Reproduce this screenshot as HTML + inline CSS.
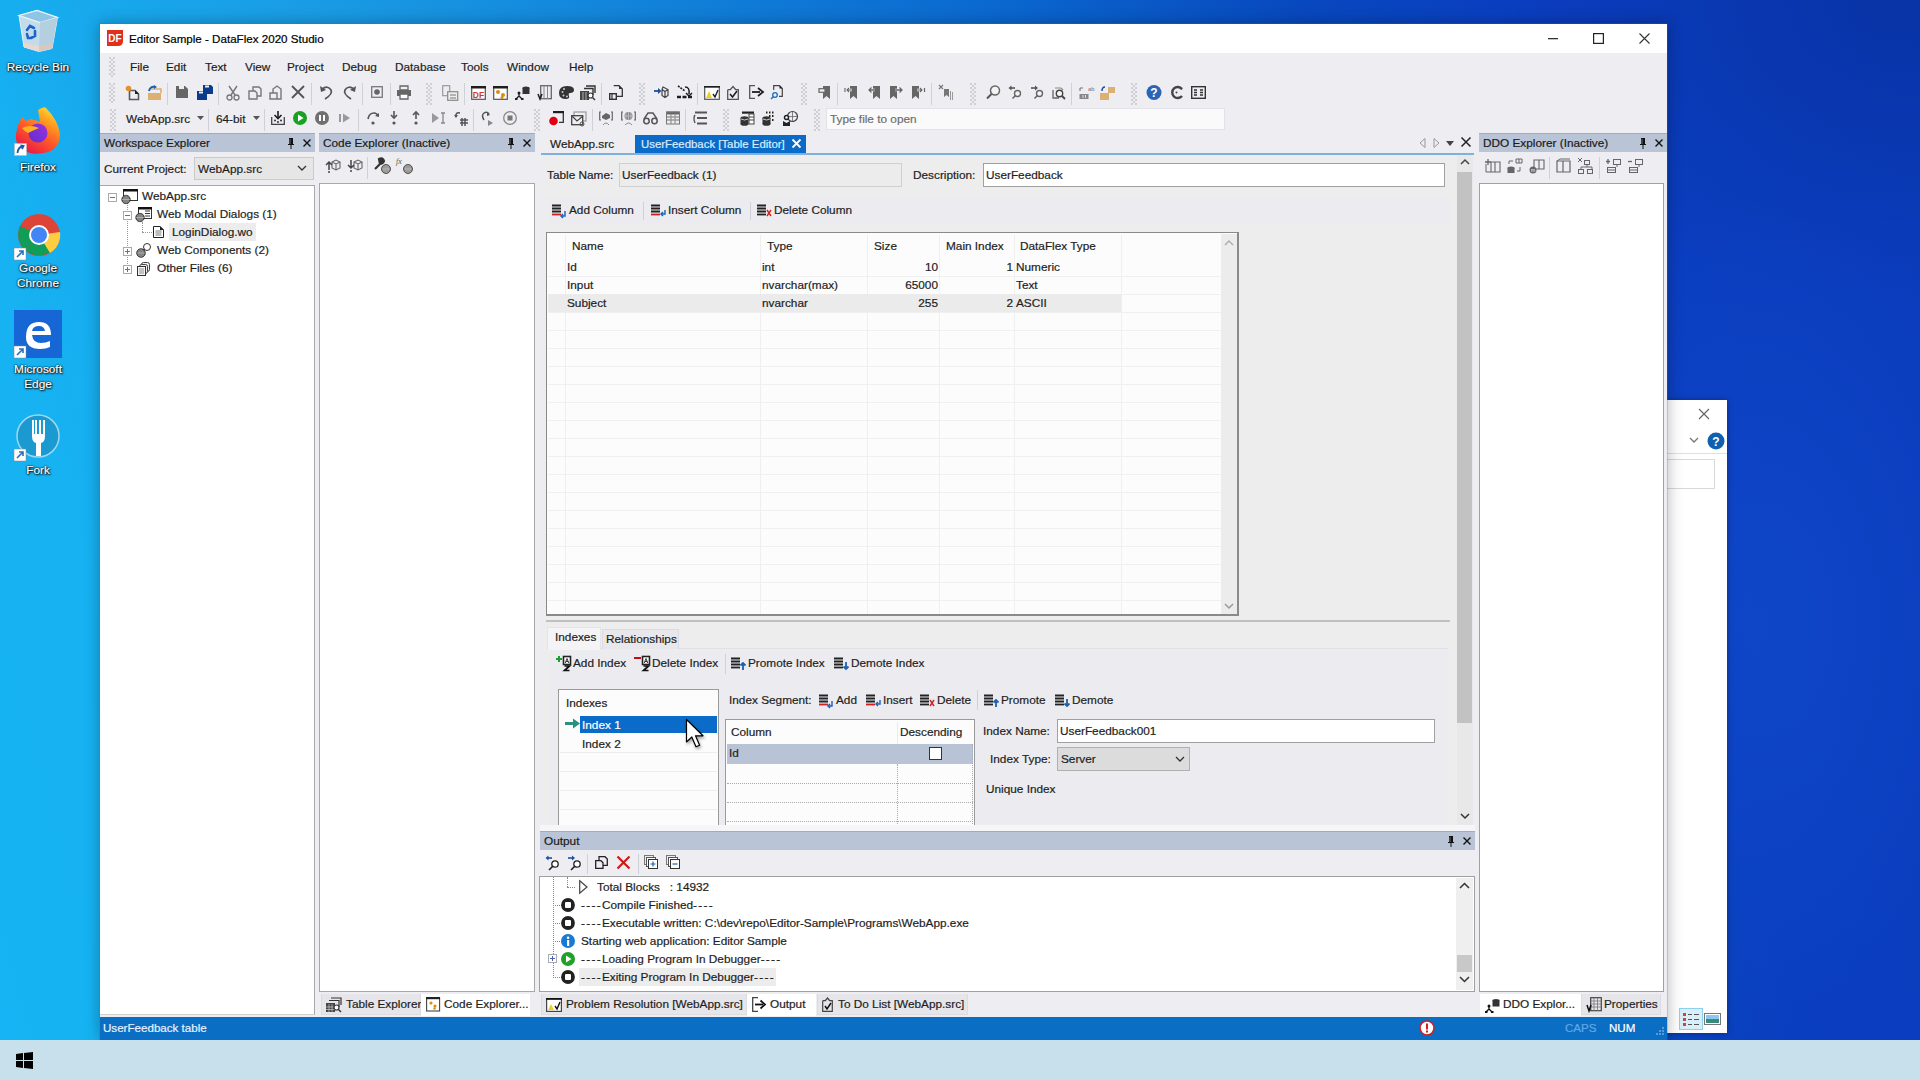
<!DOCTYPE html><html><head><meta charset="utf-8"><style>
*{margin:0;padding:0;box-sizing:border-box}
html,body{width:1920px;height:1080px;overflow:hidden}
body{position:relative;font-family:"Liberation Sans",sans-serif;font-size:12px;color:#1e1e1e;
background:radial-gradient(ellipse 260px 420px at 1760px 620px,rgba(30,100,230,.22),rgba(30,100,230,0) 100%),radial-gradient(ellipse 400px 300px at 1900px 0px,rgba(0,20,90,.22),rgba(0,20,90,0) 100%),linear-gradient(75deg,#16b4f4 0%,#16b2f2 10%,#1a9ce4 27%,#0b6ad0 57%,#0848be 72%,#0a3ec0 82%,#0a3cbc 100%)}
.t{position:absolute;white-space:nowrap;line-height:14px;-webkit-text-stroke:0.2px currentColor}
.ic{position:absolute;overflow:visible}
</style></head><body>
<svg class="ic" style="left:0px;top:0px;" width="80" height="60" viewBox="0 0 80 60"><path d="M19 15.5 L37 10.5 L57.5 17.5 L52 48.5 L39 51.5 L24 47 Z" fill="#c4dcea" stroke="#e4f2fa" stroke-width="1"/>
<path d="M19 15.5 L37 10.5 L57.5 17.5 L40 22.5 Z" fill="#8ec4e4" stroke="#e8f4fb" stroke-width="1.2"/>
<path d="M40 22.5 L57.5 17.5 L52 48.5 L39 51.5 Z" fill="#b4cfdf"/>
<path d="M24 43 L39 46 L39 51.5 L24 47Z" fill="#e8d8d0"/><path d="M39 46 L52.5 43.5 L52 48.5 L39 51.5Z" fill="#d8c8c0"/>
<path d="M27 30 L30 26 L34 28 M35 31 L35 36 L31 38 M27 34 L28 38 L31 38" fill="none" stroke="#1a64d0" stroke-width="2.6" stroke-linecap="round"/></svg>
<div class="t" style="left:-2px;top:60px;color:#fff;text-shadow:0 0 1px #000,0 0 2px #000,1px 1px 2px #000;font-size:11.8px;text-align:center;width:80px">Recycle Bin</div>
<svg class="ic" style="left:0px;top:100px;" width="80" height="60" viewBox="0 0 80 60"><defs><linearGradient id="ffg" x1="0.2" y1="1" x2="0.8" y2="0"><stop offset="0" stop-color="#e8104a"/><stop offset=".45" stop-color="#ff5a28"/><stop offset=".75" stop-color="#ffa020"/><stop offset="1" stop-color="#ffe030"/></linearGradient>
<linearGradient id="ffp" x1="0" y1="1" x2="1" y2="0"><stop offset="0" stop-color="#5a30d0"/><stop offset="1" stop-color="#a030e0"/></linearGradient></defs>
<path d="M18 25 L22 17 L26 21 L30 19 Q36 20 40 22 L38 10 Q44 6 46 8 Q58 20 60 34 Q60 50 44 53 Q30 56 20 48 Q15 42 16 34 Z" fill="url(#ffg)"/>
<circle cx="38" cy="33" r="9.5" fill="url(#ffp)"/>
<path d="M22 28 Q30 24 39 28 Q32 31 28 33 Q24 31 22 28Z" fill="#ffb020"/>
<rect x="14.5" y="43.5" width="12" height="12" fill="#fff" stroke="#bbb" stroke-width=".6"/><path d="M17.5 53 Q18 47 23 46 M20.5 45.5 L23.5 46 L22 49" stroke="#1a5aa8" stroke-width="1.8" fill="none"/></svg>
<div class="t" style="left:-2px;top:160px;color:#fff;text-shadow:0 0 1px #000,0 0 2px #000,1px 1px 2px #000;font-size:11.8px;text-align:center;width:80px">Firefox</div>
<svg class="ic" style="left:14px;top:210px;" width="48" height="52" viewBox="0 0 48 52"><circle cx="25" cy="25" r="21" fill="#db4437"/>
<path d="M25 25 L43 35 A21 21 0 0 1 11 40 Z" fill="#0f9d58"/>
<path d="M25 25 L11 40 A21 21 0 0 1 6 16 Z" fill="#0f9d58"/>
<path d="M25 25 L46 22 A21 21 0 0 1 36 43 Z" fill="#ffcd40"/>
<circle cx="25" cy="25" r="10" fill="#fff"/><circle cx="25" cy="25" r="8" fill="#4285f4"/>
<rect x="0" y="38" width="12" height="12" fill="#fff" stroke="#888" stroke-width=".5"/><path d="M3 47 L9 41 M5 41 L9 41 L9 45" stroke="#2a6fc0" stroke-width="1.6" fill="none"/></svg>
<div class="t" style="left:-2px;top:261px;color:#fff;text-shadow:0 0 1px #000,0 0 2px #000,1px 1px 2px #000;font-size:11.8px;text-align:center;width:80px">Google</div>
<div class="t" style="left:-2px;top:276px;color:#fff;text-shadow:0 0 1px #000,0 0 2px #000,1px 1px 2px #000;font-size:11.8px;text-align:center;width:80px">Chrome</div>
<svg class="ic" style="left:14px;top:310px;" width="50" height="50" viewBox="0 0 50 50"><rect x="0" y="0" width="48" height="48" fill="#1766d6"/>
<path d="M12 27 Q12 12 25 12 Q37 12 37 25 L18 25 Q19 33 27 33 Q32 33 36 31 L36 37 Q32 39 26 39 Q12 39 12 27 Z M18 21 L31 21 Q30 16 25 16 Q19 16 18 21Z" fill="#fff"/>
<rect x="0" y="36" width="12" height="12" fill="#fff" stroke="#888" stroke-width=".5"/><path d="M3 45 L9 39 M5 39 L9 39 L9 43" stroke="#2a6fc0" stroke-width="1.6" fill="none"/></svg>
<div class="t" style="left:-2px;top:362px;color:#fff;text-shadow:0 0 1px #000,0 0 2px #000,1px 1px 2px #000;font-size:11.8px;text-align:center;width:80px">Microsoft</div>
<div class="t" style="left:-2px;top:377px;color:#fff;text-shadow:0 0 1px #000,0 0 2px #000,1px 1px 2px #000;font-size:11.8px;text-align:center;width:80px">Edge</div>
<svg class="ic" style="left:14px;top:412px;" width="50" height="50" viewBox="0 0 50 50"><circle cx="24" cy="24" r="21" fill="#1a9ad0" stroke="#9fd8f0" stroke-width="1.5"/>
<path d="M18 8 L18 24 Q18 30 22 31 L22 44 L27 44 L27 31 Q31 30 31 24 L31 8 L29 8 L29 22 L27 22 L27 8 L25 8 L25 22 L23 22 L23 8 L21 8 L21 22 L20 22 L20 8Z" fill="#fff"/>
<rect x="0" y="37" width="12" height="12" fill="#fff" stroke="#888" stroke-width=".5"/><path d="M3 46 L9 40 M5 40 L9 40 L9 44" stroke="#2a6fc0" stroke-width="1.6" fill="none"/></svg>
<div class="t" style="left:-2px;top:463px;color:#fff;text-shadow:0 0 1px #000,0 0 2px #000,1px 1px 2px #000;font-size:11.8px;text-align:center;width:80px">Fork</div>
<div style="position:absolute;left:1600px;top:400px;width:127px;height:633px;background:#ffffff;box-shadow:0 0 6px rgba(0,0,0,.35)"></div>
<svg class="ic" style="left:1698px;top:408px;" width="12" height="12" viewBox="0 0 12 12"><path d="M1 1 L11 11 M11 1 L1 11" stroke="#666" stroke-width="1.2"/></svg>
<svg class="ic" style="left:1689px;top:437px;" width="10" height="7" viewBox="0 0 10 7"><path d="M1 1 L5 5 L9 1" stroke="#777" stroke-width="1.3" fill="none"/></svg>
<svg class="ic" style="left:1707px;top:432px;" width="18" height="18" viewBox="0 0 18 18"><circle cx="9" cy="9" r="8.5" fill="#1060b0"/><text x="9" y="13.5" font-size="12" font-weight="bold" text-anchor="middle" fill="#fff" font-family="Liberation Sans">?</text></svg>
<div style="position:absolute;left:1600px;top:453px;width:127px;height:1px;background:#e0e0e0"></div>
<div style="position:absolute;left:1600px;top:459px;width:115px;height:30px;border:1px solid #d8d8d8"></div>
<div style="position:absolute;left:1679px;top:1008px;width:24px;height:22px;background:#d8eef8;border:1px solid #8cd0ee"></div>
<svg class="ic" style="left:1683px;top:1012px;" width="17" height="14" viewBox="0 0 17 14"><rect x="0" y="1" width="3" height="3" fill="#c44"/><rect x="0" y="6" width="3" height="3" fill="#c44"/><rect x="0" y="11" width="3" height="3" fill="#c44"/><path d="M5 2.5 H9 M11 2.5 H16 M5 7.5 H9 M11 7.5 H16 M5 12.5 H9 M11 12.5 H16" stroke="#555"/></svg>
<svg class="ic" style="left:1704px;top:1013px;" width="17" height="12" viewBox="0 0 17 12"><rect x=".5" y=".5" width="16" height="11" fill="#fff" stroke="#777"/><rect x="2" y="2" width="13" height="8" fill="#3a8a7a"/><rect x="2" y="2" width="13" height="4" fill="#8ac8f0"/></svg>
<div style="position:absolute;left:99px;top:23px;width:1569px;height:1017px;background:rgba(30,90,140,.35);box-shadow:0 0 14px rgba(0,0,0,.28)"></div>
<div style="position:absolute;left:100px;top:24px;width:1567px;height:1016px;background:#eeeef2"></div>
<div style="position:absolute;left:100px;top:24px;width:1567px;height:29px;background:#ffffff"></div>
<svg class="ic" style="left:107px;top:30px;" width="17" height="16" viewBox="0 0 17 16"><path d="M0 0 H16 V11 Q16 16 11 16 H0Z" fill="#e0301a"/><text x="8" y="12" font-size="10" font-weight="bold" text-anchor="middle" fill="#fff" font-family="Liberation Sans">DF</text></svg>
<div class="t" style="left:129px;top:32px;font-size:11.6px;color:#000">Editor Sample - DataFlex 2020 Studio</div>
<svg class="ic" style="left:1548px;top:38px;" width="10" height="2" viewBox="0 0 10 2"><rect width="10" height="1.3" fill="#333"/></svg>
<svg class="ic" style="left:1593px;top:33px;" width="11" height="11" viewBox="0 0 11 11"><rect x=".6" y=".6" width="9.8" height="9.8" fill="none" stroke="#222" stroke-width="1.2"/></svg>
<svg class="ic" style="left:1639px;top:33px;" width="11" height="11" viewBox="0 0 11 11"><path d="M.5 .5 L10.5 10.5 M10.5 .5 L.5 10.5" stroke="#333" stroke-width="1.1"/></svg>
<div class="t" style="left:130px;top:60px;font-size:11.8px;color:#1e1e1e">File</div>
<div class="t" style="left:166px;top:60px;font-size:11.8px;color:#1e1e1e">Edit</div>
<div class="t" style="left:205px;top:60px;font-size:11.8px;color:#1e1e1e">Text</div>
<div class="t" style="left:245px;top:60px;font-size:11.8px;color:#1e1e1e">View</div>
<div class="t" style="left:287px;top:60px;font-size:11.8px;color:#1e1e1e">Project</div>
<div class="t" style="left:342px;top:60px;font-size:11.8px;color:#1e1e1e">Debug</div>
<div class="t" style="left:395px;top:60px;font-size:11.8px;color:#1e1e1e">Database</div>
<div class="t" style="left:461px;top:60px;font-size:11.8px;color:#1e1e1e">Tools</div>
<div class="t" style="left:507px;top:60px;font-size:11.8px;color:#1e1e1e">Window</div>
<div class="t" style="left:569px;top:60px;font-size:11.8px;color:#1e1e1e">Help</div>
<svg class="ic" style="left:109px;top:57px;" width="6" height="20" viewBox="0 0 6 20"><g fill="#cfcfd6"><rect x="0" y="0" width="2" height="2"/><rect x="4" y="0" width="2" height="2"/><rect x="2" y="2" width="2" height="2"/><rect x="0" y="4" width="2" height="2"/><rect x="4" y="4" width="2" height="2"/><rect x="2" y="6" width="2" height="2"/><rect x="0" y="8" width="2" height="2"/><rect x="4" y="8" width="2" height="2"/><rect x="2" y="10" width="2" height="2"/><rect x="0" y="12" width="2" height="2"/><rect x="4" y="12" width="2" height="2"/><rect x="2" y="14" width="2" height="2"/><rect x="0" y="16" width="2" height="2"/><rect x="4" y="16" width="2" height="2"/><rect x="2" y="18" width="2" height="2"/></g></svg>
<svg class="ic" style="left:109px;top:83px;" width="6" height="20" viewBox="0 0 6 20"><g fill="#cfcfd6"><rect x="0" y="0" width="2" height="2"/><rect x="4" y="0" width="2" height="2"/><rect x="2" y="2" width="2" height="2"/><rect x="0" y="4" width="2" height="2"/><rect x="4" y="4" width="2" height="2"/><rect x="2" y="6" width="2" height="2"/><rect x="0" y="8" width="2" height="2"/><rect x="4" y="8" width="2" height="2"/><rect x="2" y="10" width="2" height="2"/><rect x="0" y="12" width="2" height="2"/><rect x="4" y="12" width="2" height="2"/><rect x="2" y="14" width="2" height="2"/><rect x="0" y="16" width="2" height="2"/><rect x="4" y="16" width="2" height="2"/><rect x="2" y="18" width="2" height="2"/></g></svg>
<svg class="ic" style="left:125px;top:85px;" width="16" height="16" viewBox="0 0 16 16"><path d="M4.5 5.5 H10 L13.5 9 V14.5 H4.5Z" fill="none" stroke="#5a5a5a" stroke-width="1.6"/><path d="M10 5 L14 9 L10 9Z" fill="#1e1e1e"/><circle cx="3.5" cy="3.5" r="2.8" fill="#e8902a"/></svg>
<svg class="ic" style="left:147px;top:85px;" width="16" height="16" viewBox="0 0 16 16"><path d="M1 8 H14 V15 H1Z" fill="#dcb070"/><path d="M4 4 H14 V8" fill="none" stroke="#dcb070" stroke-width="1.6"/><path d="M2 6 Q3 1 8 2" fill="none" stroke="#1a5fb4" stroke-width="2"/><path d="M7 0 L10 2 L7 4Z" fill="#1a5fb4"/></svg>
<div style="position:absolute;left:167px;top:83px;width:1px;height:22px;background:#d0d0d8"></div>
<svg class="ic" style="left:176px;top:85px;" width="16" height="16" viewBox="0 0 16 16"><path d="M0 1 H9 L12 4 V13 H0Z" fill="#666"/><rect x="3" y="1" width="5" height="3" fill="#eee"/></svg>
<svg class="ic" style="left:197px;top:85px;" width="16" height="16" viewBox="0 0 16 16"><path d="M0 6 H8 L10 8 V15 H0Z" fill="#0b3c8a"/><path d="M6 0 H14 L16 2 V9 H6Z" fill="#0b3c8a"/><rect x="2" y="6.5" width="4" height="2" fill="#eee"/><rect x="8" y=".5" width="4" height="2" fill="#eee"/></svg>
<div style="position:absolute;left:218px;top:83px;width:1px;height:22px;background:#d0d0d8"></div>
<svg class="ic" style="left:226px;top:85px;" width="16" height="16" viewBox="0 0 16 16"><path d="M3 1 L9 10 M11 1 L5 10" stroke="#777" stroke-width="1.4" fill="none"/><circle cx="3.5" cy="12.5" r="2.5" fill="none" stroke="#777" stroke-width="1.3"/><circle cx="10.5" cy="12.5" r="2.5" fill="none" stroke="#777" stroke-width="1.3"/></svg>
<svg class="ic" style="left:248px;top:85px;" width="16" height="16" viewBox="0 0 16 16"><path d="M1 6 H7 L9 8 V14 H1Z M5 6 V2 H11 L13 4 V11 H9" fill="none" stroke="#777" stroke-width="1.4"/></svg>
<svg class="ic" style="left:269px;top:85px;" width="16" height="16" viewBox="0 0 16 16"><path d="M1 8 H8 V14 H1Z M4 8 V4 L8 1 L12 4 V14 H8" fill="none" stroke="#777" stroke-width="1.4"/></svg>
<svg class="ic" style="left:291px;top:85px;" width="16" height="16" viewBox="0 0 16 16"><path d="M1 1 L13 13 M13 1 L1 13" stroke="#555" stroke-width="1.8"/></svg>
<div style="position:absolute;left:311px;top:83px;width:1px;height:22px;background:#d0d0d8"></div>
<svg class="ic" style="left:320px;top:85px;" width="16" height="16" viewBox="0 0 16 16"><path d="M2 4 Q8 0 11 5 Q13 9 5 14" fill="none" stroke="#555" stroke-width="1.7"/><path d="M0 1 L1 7 L6 5Z" fill="#555"/></svg>
<svg class="ic" style="left:342px;top:85px;" width="16" height="16" viewBox="0 0 16 16"><path d="M12 4 Q6 0 3 5 Q1 9 9 14" fill="none" stroke="#555" stroke-width="1.7"/><path d="M14 1 L13 7 L8 5Z" fill="#555"/></svg>
<div style="position:absolute;left:362px;top:83px;width:1px;height:22px;background:#d0d0d8"></div>
<svg class="ic" style="left:371px;top:85px;" width="16" height="16" viewBox="0 0 16 16"><rect x=".7" y="1.7" width="10.6" height="10.6" fill="none" stroke="#777" stroke-width="1.3"/><circle cx="6" cy="7" r="2.8" fill="#666"/></svg>
<div style="position:absolute;left:390px;top:83px;width:1px;height:22px;background:#d0d0d8"></div>
<svg class="ic" style="left:397px;top:85px;" width="16" height="16" viewBox="0 0 16 16"><path d="M3 1 H11 V5 H3Z" fill="none" stroke="#666" stroke-width="1.3"/><path d="M0 5 H14 V11 H0Z" fill="#666"/><path d="M3 9 H11 V14 H3Z" fill="#fff" stroke="#666" stroke-width="1.3"/></svg>
<svg class="ic" style="left:426px;top:83px;" width="6" height="22" viewBox="0 0 6 22"><g fill="#cfcfd6"><rect x="0" y="0" width="2" height="2"/><rect x="4" y="0" width="2" height="2"/><rect x="2" y="2" width="2" height="2"/><rect x="0" y="4" width="2" height="2"/><rect x="4" y="4" width="2" height="2"/><rect x="2" y="6" width="2" height="2"/><rect x="0" y="8" width="2" height="2"/><rect x="4" y="8" width="2" height="2"/><rect x="2" y="10" width="2" height="2"/><rect x="0" y="12" width="2" height="2"/><rect x="4" y="12" width="2" height="2"/><rect x="2" y="14" width="2" height="2"/><rect x="0" y="16" width="2" height="2"/><rect x="4" y="16" width="2" height="2"/><rect x="2" y="18" width="2" height="2"/><rect x="0" y="20" width="2" height="2"/><rect x="4" y="20" width="2" height="2"/></g></svg>
<svg class="ic" style="left:442px;top:85px;" width="16" height="16" viewBox="0 0 16 16"><rect x=".7" y=".7" width="7" height="10" fill="none" stroke="#999" stroke-width="1.2"/><rect x="5.7" y="6.7" width="10" height="8.6" fill="#eee" stroke="#888" stroke-width="1.2"/><path d="M8 10 H14 M8 13 H14" stroke="#777"/></svg>
<div style="position:absolute;left:464px;top:83px;width:1px;height:22px;background:#d0d0d8"></div>
<svg class="ic" style="left:471px;top:85px;" width="16" height="16" viewBox="0 0 16 16"><rect x=".7" y="1.7" width="13.6" height="12.6" fill="#fff" stroke="#555" stroke-width="1.2"/><rect x="0" y="1" width="15" height="2.5" fill="#1e1e1e"/><text x="7.5" y="12.5" font-size="8.5" font-weight="bold" text-anchor="middle" fill="#d83a18" font-family="Liberation Sans">DF</text></svg>
<svg class="ic" style="left:493px;top:85px;" width="16" height="16" viewBox="0 0 16 16"><rect x=".7" y="1.7" width="13.6" height="12.6" fill="#fff" stroke="#555" stroke-width="1.2"/><rect x="0" y="1" width="15" height="2.5" fill="#1e1e1e"/><circle cx="5" cy="7" r="2" fill="#d8900a"/><circle cx="10" cy="10" r="2" fill="#d8900a"/><circle cx="9" cy="12.5" r="1.5" fill="#d8900a"/></svg>
<svg class="ic" style="left:515px;top:85px;" width="16" height="16" viewBox="0 0 16 16"><ellipse cx="11" cy="3" rx="3.5" ry="1.5" fill="#333"/><rect x="7.5" y="3" width="7" height="6" fill="#333"/><circle cx="4" cy="8" r="1.5" fill="#1e1e1e"/><path d="M4 9 V11 M1 14 L4 11 L7 14" stroke="#1e1e1e" stroke-width="1.3" fill="none"/><rect x="0" y="13" width="2.5" height="2" fill="#1e1e1e"/><rect x="6" y="13" width="2.5" height="2" fill="#1e1e1e"/></svg>
<svg class="ic" style="left:537px;top:85px;" width="16" height="16" viewBox="0 0 16 16"><rect x="3.7" y=".7" width="10.6" height="13" fill="none" stroke="#666" stroke-width="1.3"/><path d="M7 1 V14 M10.5 1 V14" stroke="#888"/><path d="M1 9 L3 14 L5 9" stroke="#1e1e1e" stroke-width="1.5" fill="none"/></svg>
<svg class="ic" style="left:559px;top:85px;" width="16" height="16" viewBox="0 0 16 16"><path d="M8 1 Q15 1 15 5 Q15 8 11 8 Q9 8 10 11 Q11 14 7 14 Q0 14 0 8 Q0 1 8 1Z" fill="#333"/><circle cx="3.5" cy="7" r="1" fill="#ccc"/><circle cx="5" cy="4" r="1" fill="#ccc"/><circle cx="4.5" cy="10.5" r="1" fill="#ccc"/><circle cx="8" cy="11.5" r="1" fill="#ccc"/></svg>
<svg class="ic" style="left:580px;top:85px;" width="16" height="16" viewBox="0 0 16 16"><path d="M6 1 H15 V8 M4 3.5 H13 V10" fill="none" stroke="#333" stroke-width="1.4"/><rect x="0" y="6" width="9" height="9" fill="#444"/><path d="M3 7 V15 M6 7 V15" stroke="#ccc" stroke-width=".8"/><circle cx="10.5" cy="10.5" r="2.5" fill="#fff" stroke="#333" stroke-width="1.2"/><path d="M12.5 12.5 L15 15" stroke="#333" stroke-width="1.4"/></svg>
<div style="position:absolute;left:601px;top:83px;width:1px;height:22px;background:#d0d0d8"></div>
<svg class="ic" style="left:609px;top:85px;" width="16" height="16" viewBox="0 0 16 16"><path d="M4.7 .7 H10 L13.3 4 V11.3 H8" fill="none" stroke="#333" stroke-width="1.3"/><path d="M10 .5 L13.5 4 H10Z" fill="#333"/><rect x=".7" y="8.7" width="6.6" height="5.6" fill="none" stroke="#333" stroke-width="1.4"/><path d="M3 9 V14" stroke="#333" stroke-width="1.2"/></svg>
<svg class="ic" style="left:639px;top:83px;" width="6" height="22" viewBox="0 0 6 22"><g fill="#cfcfd6"><rect x="0" y="0" width="2" height="2"/><rect x="4" y="0" width="2" height="2"/><rect x="2" y="2" width="2" height="2"/><rect x="0" y="4" width="2" height="2"/><rect x="4" y="4" width="2" height="2"/><rect x="2" y="6" width="2" height="2"/><rect x="0" y="8" width="2" height="2"/><rect x="4" y="8" width="2" height="2"/><rect x="2" y="10" width="2" height="2"/><rect x="0" y="12" width="2" height="2"/><rect x="4" y="12" width="2" height="2"/><rect x="2" y="14" width="2" height="2"/><rect x="0" y="16" width="2" height="2"/><rect x="4" y="16" width="2" height="2"/><rect x="2" y="18" width="2" height="2"/><rect x="0" y="20" width="2" height="2"/><rect x="4" y="20" width="2" height="2"/></g></svg>
<svg class="ic" style="left:654px;top:85px;" width="16" height="16" viewBox="0 0 16 16"><path d="M0 6 H5" stroke="#1a4fa0" stroke-width="1.8"/><path d="M4 3 L7.5 6 L4 9Z" fill="#1a4fa0"/><path d="M9 2 L14 4.5 V10.5 L11 12.5 L8 10.5 V4.5Z M8 4.5 L11 6.5 L14 4.5 M11 6.5 V12.5" fill="none" stroke="#444" stroke-width="1.2"/></svg>
<svg class="ic" style="left:677px;top:85px;" width="16" height="16" viewBox="0 0 16 16"><path d="M1 1 L8 6" stroke="#1e1e1e" stroke-width="1.6" stroke-dasharray="2 1"/><path d="M8 2 Q13 2 12 9" fill="none" stroke="#1e1e1e" stroke-width="1.5"/><path d="M9 8 L12 11 L15 8" fill="none" stroke="#1e1e1e" stroke-width="1.5"/><path d="M0 12 H4 M5.5 12 H9.5 M11 12 H15" stroke="#1e1e1e" stroke-width="2.5"/></svg>
<div style="position:absolute;left:697px;top:83px;width:1px;height:22px;background:#d0d0d8"></div>
<svg class="ic" style="left:704px;top:85px;" width="16" height="16" viewBox="0 0 16 16"><rect x=".7" y="1.7" width="14.6" height="12.6" fill="#fff" stroke="#555" stroke-width="1.2"/><rect x="0" y="1" width="16" height="1.6" fill="#1e1e1e"/><path d="M2 13 L5 6 L8 13Z" fill="#f0d020"/><path d="M9 9 L11 12 L14 5" stroke="#1e1e1e" stroke-width="1.4" fill="none"/></svg>
<svg class="ic" style="left:727px;top:85px;" width="16" height="16" viewBox="0 0 16 16"><path d="M.7 4.7 H3 M9 4.7 H11.3 V14.3 H.7 V4.7" fill="none" stroke="#555" stroke-width="1.3"/><path d="M3 5 L6 1.5 L9 5" fill="none" stroke="#555" stroke-width="1.3"/><path d="M3 9 L5.5 12 L10 6" stroke="#1e1e1e" stroke-width="1.6" fill="none"/></svg>
<svg class="ic" style="left:749px;top:85px;" width="16" height="16" viewBox="0 0 16 16"><path d="M6 .7 H.7 V13.3 H6" fill="none" stroke="#555" stroke-width="1.3"/><path d="M3 7 H11" stroke="#1e1e1e" stroke-width="1.8"/><path d="M9 3 L14 7 L9 11" stroke="#1e1e1e" stroke-width="1.8" fill="none"/></svg>
<svg class="ic" style="left:771px;top:85px;" width="16" height="16" viewBox="0 0 16 16"><path d="M2.7 5 V.7 H8.5 L11.3 3.5 V11.3 H8" fill="none" stroke="#444" stroke-width="1.2"/><path d="M8.5 .5 L11.5 3.5 H8.5Z" fill="#1e1e1e"/><circle cx="4" cy="10" r="2.3" fill="none" stroke="#1a6ac0" stroke-width="1.3"/><path d="M2.5 11.5 L0 14" stroke="#1a6ac0" stroke-width="1.5"/></svg>
<svg class="ic" style="left:801px;top:83px;" width="6" height="22" viewBox="0 0 6 22"><g fill="#cfcfd6"><rect x="0" y="0" width="2" height="2"/><rect x="4" y="0" width="2" height="2"/><rect x="2" y="2" width="2" height="2"/><rect x="0" y="4" width="2" height="2"/><rect x="4" y="4" width="2" height="2"/><rect x="2" y="6" width="2" height="2"/><rect x="0" y="8" width="2" height="2"/><rect x="4" y="8" width="2" height="2"/><rect x="2" y="10" width="2" height="2"/><rect x="0" y="12" width="2" height="2"/><rect x="4" y="12" width="2" height="2"/><rect x="2" y="14" width="2" height="2"/><rect x="0" y="16" width="2" height="2"/><rect x="4" y="16" width="2" height="2"/><rect x="2" y="18" width="2" height="2"/><rect x="0" y="20" width="2" height="2"/><rect x="4" y="20" width="2" height="2"/></g></svg>
<svg class="ic" style="left:818px;top:85px;" width="16" height="16" viewBox="0 0 16 16"><path d="M5 1 H12 V14 L8.5 11 L5 14Z" fill="#666"/><rect x="1" y="3.7" width="6" height="3.6" fill="#eee" stroke="#666" stroke-width="1.2"/></svg>
<div style="position:absolute;left:837px;top:83px;width:1px;height:22px;background:#d0d0d8"></div>
<svg class="ic" style="left:845px;top:85px;" width="16" height="16" viewBox="0 0 16 16"><path d="M5 1 H12 V14 L8.5 11 L5 14Z" fill="#666"/><path d="M0 3 V7" stroke="#666" stroke-width="1.2"/><path d="M2 5 H7 M4 3 L2 5 L4 7" stroke="#fff" stroke-width="2.4" fill="none"/><path d="M2 5 H7 M4 3 L2 5 L4 7" stroke="#666" stroke-width="1.2" fill="none"/></svg>
<svg class="ic" style="left:868px;top:85px;" width="16" height="16" viewBox="0 0 16 16"><path d="M5 1 H12 V14 L8.5 11 L5 14Z" fill="#666"/><path d="M1 5 H7 M3.5 2.5 L1 5 L3.5 7.5" stroke="#fff" stroke-width="2.4" fill="none"/><path d="M1 5 H7 M3.5 2.5 L1 5 L3.5 7.5" stroke="#666" stroke-width="1.4" fill="none"/></svg>
<svg class="ic" style="left:889px;top:85px;" width="16" height="16" viewBox="0 0 16 16"><path d="M1 1 H8 V14 L4.5 11 L1 14Z" fill="#666"/><path d="M6 5 H13 M10.5 2.5 L13 5 L10.5 7.5" stroke="#fff" stroke-width="2.4" fill="none"/><path d="M6 5 H13 M10.5 2.5 L13 5 L10.5 7.5" stroke="#666" stroke-width="1.4" fill="none"/></svg>
<svg class="ic" style="left:911px;top:85px;" width="16" height="16" viewBox="0 0 16 16"><path d="M1 1 H8 V14 L4.5 11 L1 14Z" fill="#666"/><path d="M6 5 H11 M9 3 L11 5 L9 7" stroke="#fff" stroke-width="2.4" fill="none"/><path d="M6 5 H11 M9 3 L11 5 L9 7" stroke="#666" stroke-width="1.2" fill="none"/><path d="M13.5 3 V7" stroke="#666" stroke-width="1.2"/></svg>
<div style="position:absolute;left:931px;top:83px;width:1px;height:22px;background:#d0d0d8"></div>
<svg class="ic" style="left:939px;top:85px;" width="16" height="16" viewBox="0 0 16 16"><path d="M0 0 L4 4 M4 0 L0 4" stroke="#777" stroke-width="1.1"/><path d="M5 4 H10 V12 L7.5 10 L5 12Z" fill="#777"/><path d="M11.5 6 V15 M13.5 7 V15" stroke="#999" stroke-width="1"/></svg>
<svg class="ic" style="left:970px;top:83px;" width="6" height="22" viewBox="0 0 6 22"><g fill="#cfcfd6"><rect x="0" y="0" width="2" height="2"/><rect x="4" y="0" width="2" height="2"/><rect x="2" y="2" width="2" height="2"/><rect x="0" y="4" width="2" height="2"/><rect x="4" y="4" width="2" height="2"/><rect x="2" y="6" width="2" height="2"/><rect x="0" y="8" width="2" height="2"/><rect x="4" y="8" width="2" height="2"/><rect x="2" y="10" width="2" height="2"/><rect x="0" y="12" width="2" height="2"/><rect x="4" y="12" width="2" height="2"/><rect x="2" y="14" width="2" height="2"/><rect x="0" y="16" width="2" height="2"/><rect x="4" y="16" width="2" height="2"/><rect x="2" y="18" width="2" height="2"/><rect x="0" y="20" width="2" height="2"/><rect x="4" y="20" width="2" height="2"/></g></svg>
<svg class="ic" style="left:986px;top:85px;" width="16" height="16" viewBox="0 0 16 16"><circle cx="9" cy="5.5" r="4.5" fill="#f4f4f4" stroke="#666" stroke-width="1.5"/><path d="M5.5 9 L1 13.5" stroke="#555" stroke-width="2"/></svg>
<svg class="ic" style="left:1008px;top:85px;" width="16" height="16" viewBox="0 0 16 16"><circle cx="9.5" cy="8.5" r="3" fill="#f4f4f4" stroke="#666" stroke-width="1.4"/><path d="M7.5 10.5 L4.5 13.5" stroke="#666" stroke-width="1.6"/><path d="M2 3 H7" stroke="#555" stroke-width="1.6"/><path d="M3.5 .5 L.5 3 L3.5 5.5" fill="#555"/></svg>
<svg class="ic" style="left:1030px;top:85px;" width="16" height="16" viewBox="0 0 16 16"><circle cx="9.5" cy="8.5" r="3" fill="#f4f4f4" stroke="#666" stroke-width="1.4"/><path d="M7.5 10.5 L4.5 13.5" stroke="#666" stroke-width="1.6"/><path d="M1 3 H6" stroke="#555" stroke-width="1.6"/><path d="M5 .5 L8 3 L5 5.5" fill="#555"/></svg>
<svg class="ic" style="left:1051px;top:85px;" width="16" height="16" viewBox="0 0 16 16"><path d="M2 5 V13 H8" fill="none" stroke="#666" stroke-width="1.3"/><path d="M4 3 H10 L12 5" fill="none" stroke="#888" stroke-width="1.1"/><circle cx="8.5" cy="8.5" r="3.2" fill="#f4f4f4" stroke="#444" stroke-width="1.4"/><path d="M11 11 L14 14" stroke="#444" stroke-width="1.8"/></svg>
<div style="position:absolute;left:1071px;top:83px;width:1px;height:22px;background:#d0d0d8"></div>
<svg class="ic" style="left:1079px;top:85px;" width="16" height="16" viewBox="0 0 16 16"><path d="M1 3 H4 M1 3 V6" stroke="#777" stroke-width="1.1" fill="none"/><text x="9" y="6" font-size="6" fill="#777" font-family="Liberation Sans">ab</text><rect x=".5" y="9" width="9" height="5" fill="#888"/><path d="M4 10 V13 M6.5 10 L6.5 13" stroke="#eee" stroke-width=".8"/></svg>
<svg class="ic" style="left:1100px;top:85px;" width="16" height="16" viewBox="0 0 16 16"><rect x="0" y="8" width="9" height="7" fill="#dcb070"/><rect x="8" y="2" width="7" height="6" fill="#dcb070"/><path d="M2 6 Q2 2 5 2" stroke="#1a4fa0" stroke-width="1.5" fill="none"/></svg>
<svg class="ic" style="left:1131px;top:83px;" width="6" height="22" viewBox="0 0 6 22"><g fill="#cfcfd6"><rect x="0" y="0" width="2" height="2"/><rect x="4" y="0" width="2" height="2"/><rect x="2" y="2" width="2" height="2"/><rect x="0" y="4" width="2" height="2"/><rect x="4" y="4" width="2" height="2"/><rect x="2" y="6" width="2" height="2"/><rect x="0" y="8" width="2" height="2"/><rect x="4" y="8" width="2" height="2"/><rect x="2" y="10" width="2" height="2"/><rect x="0" y="12" width="2" height="2"/><rect x="4" y="12" width="2" height="2"/><rect x="2" y="14" width="2" height="2"/><rect x="0" y="16" width="2" height="2"/><rect x="4" y="16" width="2" height="2"/><rect x="2" y="18" width="2" height="2"/><rect x="0" y="20" width="2" height="2"/><rect x="4" y="20" width="2" height="2"/></g></svg>
<svg class="ic" style="left:1146px;top:85px;" width="16" height="16" viewBox="0 0 16 16"><circle cx="8" cy="7.5" r="7.5" fill="#2a64b4"/><text x="8" y="12" font-size="12" font-weight="bold" text-anchor="middle" fill="#fff" font-family="Liberation Sans">?</text></svg>
<svg class="ic" style="left:1170px;top:85px;" width="16" height="16" viewBox="0 0 16 16"><path d="M12 4 A5.5 5.5 0 1 0 12 11" fill="none" stroke="#444" stroke-width="2.4"/><path d="M9 2 L12 4.5" stroke="#444" stroke-width="1.2"/><circle cx="6.5" cy="7.5" r="1" fill="#444"/></svg>
<svg class="ic" style="left:1191px;top:85px;" width="16" height="16" viewBox="0 0 16 16"><rect x=".7" y="1.7" width="13.6" height="11.6" fill="none" stroke="#333" stroke-width="1.4"/><path d="M3 5 H6 M9 5 H12 M3 7.5 H6 M9 7.5 H12 M3 10 H6 M9 10 H12" stroke="#333" stroke-width="1.3"/></svg>
<svg class="ic" style="left:110px;top:109px;" width="6" height="22" viewBox="0 0 6 22"><g fill="#cfcfd6"><rect x="0" y="0" width="2" height="2"/><rect x="4" y="0" width="2" height="2"/><rect x="2" y="2" width="2" height="2"/><rect x="0" y="4" width="2" height="2"/><rect x="4" y="4" width="2" height="2"/><rect x="2" y="6" width="2" height="2"/><rect x="0" y="8" width="2" height="2"/><rect x="4" y="8" width="2" height="2"/><rect x="2" y="10" width="2" height="2"/><rect x="0" y="12" width="2" height="2"/><rect x="4" y="12" width="2" height="2"/><rect x="2" y="14" width="2" height="2"/><rect x="0" y="16" width="2" height="2"/><rect x="4" y="16" width="2" height="2"/><rect x="2" y="18" width="2" height="2"/><rect x="0" y="20" width="2" height="2"/><rect x="4" y="20" width="2" height="2"/></g></svg>
<div class="t" style="left:126px;top:112px;font-size:11.8px">WebApp.src</div>
<svg class="ic" style="left:197px;top:116px;" width="7" height="4" viewBox="0 0 7 4"><path d="M0 0 H7 L3.5 4Z" fill="#555"/></svg>
<div style="position:absolute;left:208px;top:109px;width:1px;height:22px;background:#d0d0d8"></div>
<div class="t" style="left:216px;top:112px;font-size:11.8px">64-bit</div>
<svg class="ic" style="left:253px;top:116px;" width="7" height="4" viewBox="0 0 7 4"><path d="M0 0 H7 L3.5 4Z" fill="#555"/></svg>
<div style="position:absolute;left:264px;top:109px;width:1px;height:22px;background:#d0d0d8"></div>
<svg class="ic" style="left:271px;top:111px;" width="16" height="16" viewBox="0 0 16 16"><path d="M.7 6 V13.3 H13.3 V6" fill="none" stroke="#444" stroke-width="1.3"/><path d="M7 0 V7" stroke="#1e1e1e" stroke-width="1.6"/><path d="M3.5 4 L7 7.5 L10.5 4" stroke="#1e1e1e" stroke-width="1.6" fill="none"/><circle cx="4" cy="9.5" r=".9" fill="#1e1e1e"/><circle cx="7" cy="11" r=".9" fill="#1e1e1e"/><circle cx="10" cy="9.5" r=".9" fill="#1e1e1e"/></svg>
<svg class="ic" style="left:293px;top:111px;" width="16" height="16" viewBox="0 0 16 16"><circle cx="7" cy="7" r="7" fill="#1aa024"/><path d="M5 3.5 L10.5 7 L5 10.5Z" fill="#fff"/></svg>
<svg class="ic" style="left:315px;top:111px;" width="16" height="16" viewBox="0 0 16 16"><circle cx="7" cy="7" r="7" fill="#707070"/><rect x="4" y="4" width="2" height="6" fill="#fff"/><rect x="8" y="4" width="2" height="6" fill="#fff"/></svg>
<svg class="ic" style="left:339px;top:111px;" width="16" height="16" viewBox="0 0 16 16"><rect x="0" y="3" width="2" height="8" fill="#999"/><path d="M4 2.5 L11 7 L4 11.5Z" fill="#999"/></svg>
<div style="position:absolute;left:358px;top:109px;width:1px;height:22px;background:#d0d0d8"></div>
<svg class="ic" style="left:366px;top:111px;" width="16" height="16" viewBox="0 0 16 16"><path d="M2 8 Q3 2 8 2 Q11 2 12 5" fill="none" stroke="#555" stroke-width="1.6"/><path d="M9 5 L13 6 L13 2Z" fill="#555"/><circle cx="7" cy="12" r="1.6" fill="#555"/></svg>
<svg class="ic" style="left:388px;top:111px;" width="16" height="16" viewBox="0 0 16 16"><path d="M6 0 V6" stroke="#555" stroke-width="1.6"/><path d="M3 4 L6 7 L9 4" stroke="#555" stroke-width="1.6" fill="none"/><circle cx="6" cy="12" r="1.6" fill="#555"/></svg>
<svg class="ic" style="left:410px;top:111px;" width="16" height="16" viewBox="0 0 16 16"><path d="M6 8 V2" stroke="#555" stroke-width="1.6"/><path d="M3 4 L6 1 L9 4" stroke="#555" stroke-width="1.6" fill="none"/><circle cx="6" cy="12" r="1.6" fill="#555"/></svg>
<svg class="ic" style="left:432px;top:111px;" width="16" height="16" viewBox="0 0 16 16"><path d="M0 2 L7 7 L0 12Z" fill="#999"/><path d="M9 2 H13 M11 2 V12 M9 12 H13" stroke="#888" stroke-width="1.3"/></svg>
<svg class="ic" style="left:454px;top:111px;" width="16" height="16" viewBox="0 0 16 16"><path d="M2 6 Q1 1 6 2" fill="none" stroke="#555" stroke-width="1.5"/><path d="M0 4 L2 7 L4 4Z" fill="#555"/><path d="M6 9 H14 M6 12 H14 M8 7 V15 M11 7 V15" stroke="#555" stroke-width="1.5"/></svg>
<div style="position:absolute;left:473px;top:109px;width:1px;height:22px;background:#d0d0d8"></div>
<svg class="ic" style="left:481px;top:111px;" width="16" height="16" viewBox="0 0 16 16"><path d="M3 9 Q0 4 3 2 Q6 0 8 3" fill="none" stroke="#555" stroke-width="1.5"/><path d="M6 1 L9 4 L6 5Z" fill="#555"/><path d="M7 9 L12 12 L7 15Z" fill="#888"/></svg>
<svg class="ic" style="left:503px;top:111px;" width="16" height="16" viewBox="0 0 16 16"><circle cx="7" cy="7" r="6.3" fill="none" stroke="#888" stroke-width="1.3"/><rect x="4.5" y="4.5" width="5" height="5" fill="#777"/></svg>
<svg class="ic" style="left:534px;top:109px;" width="6" height="22" viewBox="0 0 6 22"><g fill="#cfcfd6"><rect x="0" y="0" width="2" height="2"/><rect x="4" y="0" width="2" height="2"/><rect x="2" y="2" width="2" height="2"/><rect x="0" y="4" width="2" height="2"/><rect x="4" y="4" width="2" height="2"/><rect x="2" y="6" width="2" height="2"/><rect x="0" y="8" width="2" height="2"/><rect x="4" y="8" width="2" height="2"/><rect x="2" y="10" width="2" height="2"/><rect x="0" y="12" width="2" height="2"/><rect x="4" y="12" width="2" height="2"/><rect x="2" y="14" width="2" height="2"/><rect x="0" y="16" width="2" height="2"/><rect x="4" y="16" width="2" height="2"/><rect x="2" y="18" width="2" height="2"/><rect x="0" y="20" width="2" height="2"/><rect x="4" y="20" width="2" height="2"/></g></svg>
<svg class="ic" style="left:549px;top:111px;" width="16" height="16" viewBox="0 0 16 16"><path d="M4 .7 H14.3 V11.3 H10" fill="none" stroke="#333" stroke-width="1.3"/><rect x="4" y="0" width="11" height="2.2" fill="#1e1e1e"/><circle cx="4.5" cy="10" r="4.3" fill="#e00010"/></svg>
<svg class="ic" style="left:571px;top:111px;" width="16" height="16" viewBox="0 0 16 16"><rect x="3" y="1" width="12" height="9" fill="none" stroke="#999" stroke-width="1.2"/><rect x=".7" y="4.7" width="11" height="9" fill="#f0f0f0" stroke="#444" stroke-width="1.3"/><path d="M1 5 L6 10 L12 5" fill="none" stroke="#444" stroke-width="1.2"/><circle cx="11" cy="13" r="2" fill="none" stroke="#555"/></svg>
<div style="position:absolute;left:592px;top:109px;width:1px;height:22px;background:#d0d0d8"></div>
<svg class="ic" style="left:599px;top:111px;" width="16" height="16" viewBox="0 0 16 16"><path d="M2 1 H0.7 V9 H2 M12 1 H13.3 V9 H12" fill="none" stroke="#666" stroke-width="1.2"/><path d="M3 5 L7 2 L11 4 V7 L7 9 L3 7Z" fill="#666"/><path d="M4 14 Q7 10 10 14" fill="none" stroke="#888"/></svg>
<svg class="ic" style="left:621px;top:111px;" width="16" height="16" viewBox="0 0 16 16"><path d="M2 1 H0.7 V9 H2 M13 1 H14.3 V9 H13" fill="none" stroke="#666" stroke-width="1.2"/><circle cx="7.5" cy="5" r="4" fill="#888"/><path d="M5 1.5 V8.5 M7.5 1 V9 M10 1.5 V8.5 M3.5 5 H11.5" stroke="#ccc" stroke-width=".7"/><path d="M4 14 Q7.5 10 11 14" fill="none" stroke="#888"/></svg>
<svg class="ic" style="left:643px;top:111px;" width="16" height="16" viewBox="0 0 16 16"><circle cx="3.5" cy="10" r="2.7" fill="none" stroke="#555" stroke-width="1.5"/><circle cx="11.5" cy="10" r="2.7" fill="none" stroke="#555" stroke-width="1.5"/><path d="M1 8 L5 2 H10 L14 8" fill="none" stroke="#555" stroke-width="1.4"/></svg>
<svg class="ic" style="left:665px;top:111px;" width="16" height="16" viewBox="0 0 16 16"><rect x="1.5" y=".5" width="13" height="3" fill="#666"/><rect x="1.5" y="1" width="13" height="12" fill="none" stroke="#777" stroke-width="1"/><path d="M2 6 H14 M2 9 H14 M6 3 V13 M10 3 V13" stroke="#999" stroke-width="1.3"/></svg>
<div style="position:absolute;left:685px;top:109px;width:1px;height:22px;background:#d0d0d8"></div>
<svg class="ic" style="left:693px;top:111px;" width="16" height="16" viewBox="0 0 16 16"><path d="M2 1.5 H14 M4 7 H14 M4 12.5 H14" stroke="#555" stroke-width="2.2"/><path d="M2 4 Q0 7 2 12" stroke="#555" stroke-width="1.4" fill="none"/></svg>
<svg class="ic" style="left:723px;top:109px;" width="6" height="22" viewBox="0 0 6 22"><g fill="#cfcfd6"><rect x="0" y="0" width="2" height="2"/><rect x="4" y="0" width="2" height="2"/><rect x="2" y="2" width="2" height="2"/><rect x="0" y="4" width="2" height="2"/><rect x="4" y="4" width="2" height="2"/><rect x="2" y="6" width="2" height="2"/><rect x="0" y="8" width="2" height="2"/><rect x="4" y="8" width="2" height="2"/><rect x="2" y="10" width="2" height="2"/><rect x="0" y="12" width="2" height="2"/><rect x="4" y="12" width="2" height="2"/><rect x="2" y="14" width="2" height="2"/><rect x="0" y="16" width="2" height="2"/><rect x="4" y="16" width="2" height="2"/><rect x="2" y="18" width="2" height="2"/><rect x="0" y="20" width="2" height="2"/><rect x="4" y="20" width="2" height="2"/></g></svg>
<svg class="ic" style="left:740px;top:111px;" width="16" height="16" viewBox="0 0 16 16"><ellipse cx="4.5" cy="7" rx="4" ry="1.8" fill="#333"/><rect x=".5" y="7" width="8" height="6" fill="#333"/><ellipse cx="4.5" cy="13" rx="4" ry="1.8" fill="#333"/><path d="M1 8 Q4.5 10 8 8" stroke="#eee" stroke-width=".8" fill="none"/><rect x="2" y=".5" width="12" height="2.2" fill="#222"/><rect x="9" y="3" width="5" height="10" fill="#fff" stroke="#444"/><path d="M9 6 H14 M9 9 H14" stroke="#444"/></svg>
<svg class="ic" style="left:762px;top:111px;" width="16" height="16" viewBox="0 0 16 16"><ellipse cx="4.5" cy="7" rx="4" ry="1.8" fill="#333"/><rect x=".5" y="7" width="8" height="6" fill="#333"/><ellipse cx="4.5" cy="13" rx="4" ry="1.8" fill="#333"/><path d="M1 8 Q4.5 10 8 8" stroke="#eee" stroke-width=".8" fill="none"/><path d="M4 1.5 H5.5 M7 1.5 H8.5 M10 1.5 H11.5 M10 5 H11.5 M10 9 H11.5 M7 5 H8.5" stroke="#222" stroke-width="2"/></svg>
<svg class="ic" style="left:783px;top:111px;" width="16" height="16" viewBox="0 0 16 16"><circle cx="9.5" cy="5.5" r="5" fill="none" stroke="#444" stroke-width="1.2"/><path d="M9.5 1 V10 M5 5.5 H14" stroke="#666" stroke-width=".8"/><circle cx="3.5" cy="6.5" r="2" fill="#fff" stroke="#222" stroke-width="1.5"/><path d="M0 15 V10 L3.5 12 L7 10 V15Z" fill="#222"/></svg>
<svg class="ic" style="left:814px;top:109px;" width="6" height="22" viewBox="0 0 6 22"><g fill="#cfcfd6"><rect x="0" y="0" width="2" height="2"/><rect x="4" y="0" width="2" height="2"/><rect x="2" y="2" width="2" height="2"/><rect x="0" y="4" width="2" height="2"/><rect x="4" y="4" width="2" height="2"/><rect x="2" y="6" width="2" height="2"/><rect x="0" y="8" width="2" height="2"/><rect x="4" y="8" width="2" height="2"/><rect x="2" y="10" width="2" height="2"/><rect x="0" y="12" width="2" height="2"/><rect x="4" y="12" width="2" height="2"/><rect x="2" y="14" width="2" height="2"/><rect x="0" y="16" width="2" height="2"/><rect x="4" y="16" width="2" height="2"/><rect x="2" y="18" width="2" height="2"/><rect x="0" y="20" width="2" height="2"/><rect x="4" y="20" width="2" height="2"/></g></svg>
<div style="position:absolute;left:826px;top:108px;width:399px;height:22px;background:#fafafa;border:1px solid #e2e2e8"></div>
<div class="t" style="left:830px;top:112px;color:#6e6e6e;font-size:11.8px">Type file to open</div>
<div style="position:absolute;left:100px;top:1017px;width:1567px;height:23px;background:#0a6ec4"></div>
<div class="t" style="left:103px;top:1021px;color:#e8f2ff;font-size:11.6px">UserFeedback table</div>
<svg class="ic" style="left:1419px;top:1020px;" width="16" height="16" viewBox="0 0 16 16"><circle cx="8" cy="8" r="7" fill="#fff" stroke="#d02020" stroke-width="1.6"/><rect x="7" y="3.5" width="2" height="6" fill="#d02020"/><rect x="7" y="10.5" width="2" height="2" fill="#d02020"/></svg>
<div class="t" style="left:1565px;top:1021px;color:#62a8e4;font-size:11.6px">CAPS</div>
<div class="t" style="left:1609px;top:1021px;color:#ffffff;font-size:11.6px">NUM</div>
<svg class="ic" style="left:1654px;top:1027px;" width="10" height="10" viewBox="0 0 10 10"><g fill="#5a9ad8"><rect x="8" y="0" width="2" height="2"/><rect x="5" y="3" width="2" height="2"/><rect x="8" y="3" width="2" height="2"/><rect x="2" y="6" width="2" height="2"/><rect x="5" y="6" width="2" height="2"/><rect x="8" y="6" width="2" height="2"/></g></svg>
<div style="position:absolute;left:100px;top:133px;width:215px;height:19px;background:#b9c5d7;border-top:1px solid #a6aab8"></div>
<div class="t" style="left:104px;top:136px;font-size:11.8px;color:#1a1a1a">Workspace Explorer</div>
<svg class="ic" style="left:287px;top:138px;" width="8" height="11" viewBox="0 0 8 11"><path d="M2 0 H6 V6 H7 V7 H1 V6 H2Z" fill="#111"/><path d="M3 1 V6" stroke="#888" stroke-width=".8"/><rect x="3.5" y="7" width="1" height="4" fill="#111"/></svg>
<svg class="ic" style="left:303px;top:139px;" width="8" height="8" viewBox="0 0 8 8"><path d="M.5 .5 L7.5 7.5 M7.5 .5 L.5 7.5" stroke="#111" stroke-width="1.4"/></svg>
<div class="t" style="left:104px;top:162px;font-size:11.8px">Current Project:</div>
<div style="position:absolute;left:194px;top:157px;width:120px;height:23px;background:#e6e6e6;border:1px solid #cacaca"></div>
<div class="t" style="left:198px;top:162px;font-size:11.8px">WebApp.src</div>
<svg class="ic" style="left:297px;top:165px;" width="10" height="6" viewBox="0 0 10 6"><path d="M1 1 L5 5 L9 1" stroke="#333" stroke-width="1.3" fill="none"/></svg>
<div style="position:absolute;left:100px;top:185px;width:215px;height:830px;background:#fff;border:1px solid #a8a8a8;border-left:none;border-bottom-color:#d0d0d0"></div>
<div style="position:absolute;left:112px;top:201px;width:0px;height:0px;"></div>
<div style="position:absolute;left:127px;top:203px;width:1px;height:65px;border-left:1px dotted #999"></div>
<div style="position:absolute;left:142px;top:222px;width:1px;height:10px;border-left:1px dotted #999"></div>
<div style="position:absolute;left:142px;top:232px;width:10px;height:1px;border-top:1px dotted #999"></div>
<svg class="ic" style="left:108px;top:193px;" width="9" height="9" viewBox="0 0 9 9"><rect x=".5" y=".5" width="8" height="8" fill="#fff" stroke="#aaa"/><path d="M2 4.5 H7" stroke="#6070a0"/></svg>
<svg class="ic" style="left:121px;top:189px;" width="17" height="15" viewBox="0 0 17 15"><rect x="2.5" y=".5" width="14" height="11" fill="#fff" stroke="#333"/><rect x="2" y="0" width="15" height="2.5" fill="#111"/><circle cx="5" cy="10.5" r="4.2" fill="#666" stroke="#222" stroke-width=".8"/><path d="M1 10.5 H9 M5 6.5 V14.5 M3 7.5 V13.5 M7 7.5 V13.5" stroke="#ccc" stroke-width=".6"/></svg>
<div class="t" style="left:142px;top:189px;font-size:11.8px">WebApp.src</div>
<svg class="ic" style="left:123px;top:211px;" width="9" height="9" viewBox="0 0 9 9"><rect x=".5" y=".5" width="8" height="8" fill="#fff" stroke="#aaa"/><path d="M2 4.5 H7" stroke="#6070a0"/></svg>
<svg class="ic" style="left:135px;top:207px;" width="17" height="15" viewBox="0 0 17 15"><rect x="3.5" y=".5" width="13" height="11" fill="#fff" stroke="#333"/><rect x="3" y="0" width="14" height="2.5" fill="#111"/><path d="M10 4 H15 M10 6.5 H15 M10 9 H15" stroke="#333"/><circle cx="5" cy="10.5" r="4.2" fill="#666" stroke="#222" stroke-width=".8"/><path d="M1 10.5 H9 M5 6.5 V14.5 M3 7.5 V13.5 M7 7.5 V13.5" stroke="#ccc" stroke-width=".6"/></svg>
<div class="t" style="left:157px;top:207px;font-size:11.8px">Web Modal Dialogs (1)</div>
<div style="position:absolute;left:169px;top:223px;width:87px;height:18px;background:#ececec"></div>
<svg class="ic" style="left:153px;top:226px;" width="11" height="12" viewBox="0 0 11 12"><path d="M.5 .5 H7 L10.5 4 V11.5 H.5Z" fill="#fff" stroke="#222"/><path d="M7 0 L11 4 H7Z" fill="#222"/><path d="M2.5 5 H8.5 M2.5 7 H8.5 M2.5 9 H8.5" stroke="#555" stroke-width=".8"/></svg>
<div class="t" style="left:172px;top:225px;font-size:11.8px">LoginDialog.wo</div>
<svg class="ic" style="left:123px;top:247px;" width="9" height="9" viewBox="0 0 9 9"><rect x=".5" y=".5" width="8" height="8" fill="#fff" stroke="#aaa"/><path d="M2 4.5 H7" stroke="#6070a0"/><path d="M4.5 2 V7" stroke="#6070a0"/></svg>
<svg class="ic" style="left:136px;top:243px;" width="16" height="15" viewBox="0 0 16 15"><circle cx="11" cy="4" r="3.5" fill="#fff" stroke="#333"/><circle cx="5" cy="10" r="4.3" fill="#666" stroke="#222" stroke-width=".8"/><path d="M1 10 H9 M5 6 V14 M3 7 V13 M7 7 V13" stroke="#ccc" stroke-width=".6"/><path d="M7 7 L9 6" stroke="#333"/></svg>
<div class="t" style="left:157px;top:243px;font-size:11.8px">Web Components (2)</div>
<svg class="ic" style="left:123px;top:265px;" width="9" height="9" viewBox="0 0 9 9"><rect x=".5" y=".5" width="8" height="8" fill="#fff" stroke="#aaa"/><path d="M2 4.5 H7" stroke="#6070a0"/><path d="M4.5 2 V7" stroke="#6070a0"/></svg>
<svg class="ic" style="left:137px;top:262px;" width="13" height="14" viewBox="0 0 13 14"><rect x="4.5" y=".5" width="8" height="9" fill="#eee" stroke="#444" rx="2"/><rect x="2.5" y="2.5" width="8" height="9" fill="#eee" stroke="#444" rx="2"/><rect x=".5" y="4.5" width="8" height="9" fill="#f4f4f4" stroke="#333"/><path d="M2 7 H7 M2 9 H7 M2 11 H7" stroke="#666" stroke-width=".7"/></svg>
<div class="t" style="left:157px;top:261px;font-size:11.8px">Other Files (6)</div>
<div style="position:absolute;left:319px;top:133px;width:216px;height:19px;background:#b9c5d7;border-top:1px solid #a6aab8"></div>
<div class="t" style="left:323px;top:136px;font-size:11.8px;color:#1a1a1a">Code Explorer (Inactive)</div>
<svg class="ic" style="left:507px;top:138px;" width="8" height="11" viewBox="0 0 8 11"><path d="M2 0 H6 V6 H7 V7 H1 V6 H2Z" fill="#111"/><path d="M3 1 V6" stroke="#888" stroke-width=".8"/><rect x="3.5" y="7" width="1" height="4" fill="#111"/></svg>
<svg class="ic" style="left:523px;top:139px;" width="8" height="8" viewBox="0 0 8 8"><path d="M.5 .5 L7.5 7.5 M7.5 .5 L.5 7.5" stroke="#111" stroke-width="1.4"/></svg>
<svg class="ic" style="left:325px;top:158px;" width="16" height="16" viewBox="0 0 16 16"><path d="M7 4 L11 2 L15 4 V10 L11 12 L7 10Z M7 4 L11 6 L15 4 M11 6 V12" fill="none" stroke="#666" stroke-width="1.1"/><path d="M4 12 V4 M1 7 L4 4 L7 7" stroke="#444" stroke-width="1.5" fill="none"/><circle cx="4" cy="14" r="1" fill="#444"/></svg>
<svg class="ic" style="left:347px;top:158px;" width="16" height="16" viewBox="0 0 16 16"><path d="M7 4 L11 2 L15 4 V10 L11 12 L7 10Z M7 4 L11 6 L15 4 M11 6 V12" fill="none" stroke="#666" stroke-width="1.1"/><path d="M4 2 V10 M1 7 L4 10 L7 7" stroke="#444" stroke-width="1.5" fill="none"/><circle cx="4" cy="13" r="1" fill="#444"/></svg>
<div style="position:absolute;left:367px;top:157px;width:1px;height:22px;background:#d0d0d8"></div>
<svg class="ic" style="left:374px;top:157px;" width="18" height="18" viewBox="0 0 18 18"><path d="M1 12 L7 6 M5 2 Q9 0 10 4 Q9 7 6 7Z" stroke="#333" stroke-width="2.2" fill="#333"/><circle cx="12" cy="12" r="4.5" fill="#888" stroke="#555"/><path d="M8 12 H16 M12 8 V16 M10 9 V15 M14 9 V15" stroke="#ccc" stroke-width=".6"/></svg>
<svg class="ic" style="left:396px;top:157px;" width="18" height="18" viewBox="0 0 18 18"><text x="0" y="7" font-size="8" font-style="italic" fill="#555" font-family="Liberation Serif">fx</text><circle cx="12" cy="12" r="4.5" fill="#888" stroke="#555"/><path d="M8 12 H16 M12 8 V16 M10 9 V15 M14 9 V15" stroke="#ccc" stroke-width=".6"/></svg>
<div style="position:absolute;left:319px;top:183px;width:216px;height:809px;background:#fff;border:1px solid #a8a8a8"></div>
<div style="position:absolute;left:321px;top:994px;width:100px;height:21px;background:#e6e6ea;border:1px solid #dcdce0;border-top:none"></div>
<svg class="ic" style="left:326px;top:997px;" width="16" height="16" viewBox="0 0 16 16"><path d="M5 1 H15 V8 M3 3.5 H13 V10" fill="none" stroke="#333" stroke-width="1.2"/><rect x="0" y="6" width="9" height="9" fill="#444"/><path d="M3 7 V15 M6 7 V15 M0 10 H9 M0 12.5 H9" stroke="#ccc" stroke-width=".7"/><circle cx="10.5" cy="10.5" r="2.5" fill="#fff" stroke="#333" stroke-width="1.2"/><path d="M12.5 12.5 L15 15" stroke="#333" stroke-width="1.4"/></svg>
<div class="t" style="left:346px;top:997px;font-size:11.8px">Table Explorer</div>
<div style="position:absolute;left:421px;top:994px;width:109px;height:22px;background:#ffffff"></div>
<svg class="ic" style="left:426px;top:997px;" width="15" height="15" viewBox="0 0 15 15"><rect x=".6" y="1" width="13" height="13" fill="#fff" stroke="#444" stroke-width="1.1"/><rect x="0" y="0" width="14" height="2.2" fill="#222"/><circle cx="5" cy="6" r="1.6" fill="#d8900a"/><circle cx="9" cy="9" r="1.6" fill="#d8900a"/><circle cx="8.5" cy="11.5" r="1.2" fill="#d8900a"/></svg>
<div class="t" style="left:444px;top:997px;font-size:11.8px">Code Explorer...</div>
<div class="t" style="left:550px;top:137px;font-size:11.8px">WebApp.src</div>
<div style="position:absolute;left:635px;top:135px;width:171px;height:19px;background:#0a6cc8"></div>
<div class="t" style="left:641px;top:137px;font-size:11.4px;color:#dcecff">UserFeedback [Table Editor]</div>
<svg class="ic" style="left:792px;top:139px;" width="9" height="9" viewBox="0 0 9 9"><path d="M.5 .5 L8.5 8.5 M8.5 .5 L.5 8.5" stroke="#fff" stroke-width="1.8"/></svg>
<div style="position:absolute;left:541px;top:153px;width:933px;height:2px;background:#80b0dc"></div>
<svg class="ic" style="left:1419px;top:138px;" width="7" height="10" viewBox="0 0 7 10"><path d="M6 .5 L1 5 L6 9.5Z" fill="none" stroke="#999"/></svg>
<svg class="ic" style="left:1433px;top:138px;" width="7" height="10" viewBox="0 0 7 10"><path d="M1 .5 L6 5 L1 9.5Z" fill="none" stroke="#999"/></svg>
<svg class="ic" style="left:1446px;top:141px;" width="8" height="5" viewBox="0 0 8 5"><path d="M0 0 H8 L4 5Z" fill="#444"/></svg>
<svg class="ic" style="left:1461px;top:137px;" width="10" height="10" viewBox="0 0 10 10"><path d="M.5 .5 L9.5 9.5 M9.5 .5 L.5 9.5" stroke="#222" stroke-width="1.5"/></svg>
<div style="position:absolute;left:541px;top:155px;width:916px;height:670px;background:#ededed"></div>
<div style="position:absolute;left:1457px;top:155px;width:16px;height:670px;background:#e8e8e8"></div>
<div style="position:absolute;left:1457px;top:172px;width:15px;height:551px;background:#c2c2c2"></div>
<svg class="ic" style="left:1460px;top:159px;" width="10" height="6" viewBox="0 0 10 6"><path d="M1 5 L5 1 L9 5" stroke="#444" stroke-width="1.5" fill="none"/></svg>
<svg class="ic" style="left:1460px;top:813px;" width="10" height="6" viewBox="0 0 10 6"><path d="M1 1 L5 5 L9 1" stroke="#333" stroke-width="1.5" fill="none"/></svg>
<div class="t" style="left:547px;top:168px;font-size:11.8px">Table Name:</div>
<div style="position:absolute;left:619px;top:163px;width:283px;height:24px;background:#ececec;border:1px solid #d0d0d0"></div>
<div class="t" style="left:622px;top:168px;font-size:11.8px">UserFeedback (1)</div>
<div class="t" style="left:913px;top:168px;font-size:11.8px">Description:</div>
<div style="position:absolute;left:983px;top:163px;width:462px;height:24px;background:#fff;border:1px solid #a0a0a0"></div>
<div class="t" style="left:986px;top:168px;font-size:11.8px">UserFeedback</div>
<div style="position:absolute;left:547px;top:197px;width:903px;height:26px;background:#ebebf0"></div>
<svg class="ic" style="left:552px;top:204px;" width="15" height="15" viewBox="0 0 15 15"><path d="M0 1.5 H9 M0 4.5 H9 M0 7.5 H9" stroke="#222" stroke-width="1.8"/><path d="M0 10.5 H9" stroke="#d02020" stroke-width="1.8"/><path d="M13 7 V12 H9" stroke="#1a5fb4" stroke-width="1.4" fill="none"/><path d="M11 10 L9 12 L11 14" stroke="#1a5fb4" stroke-width="1.4" fill="none"/></svg>
<div class="t" style="left:569px;top:203px;font-size:11.8px">Add Column</div>
<div style="position:absolute;left:643px;top:202px;width:1px;height:18px;background:#d0d0d8"></div>
<svg class="ic" style="left:651px;top:204px;" width="15" height="15" viewBox="0 0 15 15"><path d="M0 1.5 H9 M0 4.5 H9 M0 7.5 H9" stroke="#222" stroke-width="1.8"/><path d="M0 10.5 H9" stroke="#d02020" stroke-width="1.8"/><path d="M14 6 V10 H10" stroke="#1a5fb4" stroke-width="1.4" fill="none"/><path d="M12 8 L10 10 L12 12" stroke="#1a5fb4" stroke-width="1.4" fill="none"/></svg>
<div class="t" style="left:668px;top:203px;font-size:11.8px">Insert Column</div>
<div style="position:absolute;left:750px;top:202px;width:1px;height:18px;background:#d0d0d8"></div>
<svg class="ic" style="left:757px;top:204px;" width="15" height="15" viewBox="0 0 15 15"><path d="M0 1.5 H9 M0 4.5 H9 M0 7.5 H9" stroke="#222" stroke-width="1.8"/><path d="M0 10.5 H9" stroke="#222" stroke-width="1.8"/><path d="M10 6 L14 12 M14 6 L10 12" stroke="#d02020" stroke-width="1.4"/></svg>
<div class="t" style="left:774px;top:203px;font-size:11.8px">Delete Column</div>
<div style="position:absolute;left:546px;top:232px;width:693px;height:384px;background:#fcfcfc;border:1px solid #8a8a8a;border-right-width:2px;border-bottom-width:2px"></div>
<div style="position:absolute;left:565px;top:235px;width:1px;height:379px;background:#efefef"></div>
<div style="position:absolute;left:760px;top:235px;width:1px;height:379px;background:#efefef"></div>
<div style="position:absolute;left:867px;top:235px;width:1px;height:379px;background:#efefef"></div>
<div style="position:absolute;left:939px;top:235px;width:1px;height:379px;background:#efefef"></div>
<div style="position:absolute;left:1014px;top:235px;width:1px;height:379px;background:#efefef"></div>
<div style="position:absolute;left:1121px;top:235px;width:1px;height:379px;background:#efefef"></div>
<div style="position:absolute;left:548px;top:276px;width:673px;height:1px;background:#f0f0f0"></div>
<div style="position:absolute;left:548px;top:294px;width:673px;height:1px;background:#f0f0f0"></div>
<div style="position:absolute;left:548px;top:312px;width:673px;height:1px;background:#f0f0f0"></div>
<div style="position:absolute;left:548px;top:330px;width:673px;height:1px;background:#f0f0f0"></div>
<div style="position:absolute;left:548px;top:348px;width:673px;height:1px;background:#f0f0f0"></div>
<div style="position:absolute;left:548px;top:366px;width:673px;height:1px;background:#f0f0f0"></div>
<div style="position:absolute;left:548px;top:384px;width:673px;height:1px;background:#f0f0f0"></div>
<div style="position:absolute;left:548px;top:402px;width:673px;height:1px;background:#f0f0f0"></div>
<div style="position:absolute;left:548px;top:420px;width:673px;height:1px;background:#f0f0f0"></div>
<div style="position:absolute;left:548px;top:438px;width:673px;height:1px;background:#f0f0f0"></div>
<div style="position:absolute;left:548px;top:456px;width:673px;height:1px;background:#f0f0f0"></div>
<div style="position:absolute;left:548px;top:474px;width:673px;height:1px;background:#f0f0f0"></div>
<div style="position:absolute;left:548px;top:492px;width:673px;height:1px;background:#f0f0f0"></div>
<div style="position:absolute;left:548px;top:510px;width:673px;height:1px;background:#f0f0f0"></div>
<div style="position:absolute;left:548px;top:528px;width:673px;height:1px;background:#f0f0f0"></div>
<div style="position:absolute;left:548px;top:546px;width:673px;height:1px;background:#f0f0f0"></div>
<div style="position:absolute;left:548px;top:564px;width:673px;height:1px;background:#f0f0f0"></div>
<div style="position:absolute;left:548px;top:582px;width:673px;height:1px;background:#f0f0f0"></div>
<div style="position:absolute;left:548px;top:600px;width:673px;height:1px;background:#f0f0f0"></div>
<div style="position:absolute;left:548px;top:294px;width:573px;height:18px;background:#ebebeb"></div>
<div style="position:absolute;left:1221px;top:234px;width:16px;height:380px;background:#ececec"></div>
<svg class="ic" style="left:1224px;top:240px;" width="10" height="6" viewBox="0 0 10 6"><path d="M1 5 L5 1 L9 5" stroke="#aaa" stroke-width="1.3" fill="none"/></svg>
<svg class="ic" style="left:1224px;top:603px;" width="10" height="6" viewBox="0 0 10 6"><path d="M1 1 L5 5 L9 1" stroke="#999" stroke-width="1.5" fill="none"/></svg>
<div class="t" style="left:572px;top:239px;font-size:11.8px">Name</div>
<div class="t" style="left:767px;top:239px;font-size:11.8px">Type</div>
<div class="t" style="left:874px;top:239px;font-size:11.8px">Size</div>
<div class="t" style="left:946px;top:239px;font-size:11.8px">Main Index</div>
<div class="t" style="left:1020px;top:239px;font-size:11.8px">DataFlex Type</div>
<div class="t" style="left:567px;top:260px;font-size:11.8px">Id</div>
<div class="t" style="left:762px;top:260px;font-size:11.8px">int</div>
<div class="t" style="left:860px;width:78px;text-align:right;top:260px;font-size:11.8px">10</div>
<div class="t" style="left:940px;width:73px;text-align:right;top:260px;font-size:11.8px">1</div>
<div class="t" style="left:1016px;top:260px;font-size:11.8px">Numeric</div>
<div class="t" style="left:567px;top:278px;font-size:11.8px">Input</div>
<div class="t" style="left:762px;top:278px;font-size:11.8px">nvarchar(max)</div>
<div class="t" style="left:860px;width:78px;text-align:right;top:278px;font-size:11.8px">65000</div>
<div class="t" style="left:940px;width:73px;text-align:right;top:278px;font-size:11.8px"></div>
<div class="t" style="left:1016px;top:278px;font-size:11.8px">Text</div>
<div class="t" style="left:567px;top:296px;font-size:11.8px">Subject</div>
<div class="t" style="left:762px;top:296px;font-size:11.8px">nvarchar</div>
<div class="t" style="left:860px;width:78px;text-align:right;top:296px;font-size:11.8px">255</div>
<div class="t" style="left:940px;width:73px;text-align:right;top:296px;font-size:11.8px">2</div>
<div class="t" style="left:1016px;top:296px;font-size:11.8px">ASCII</div>
<div style="position:absolute;left:546px;top:620px;width:904px;height:2px;background:#c0c0c0"></div>
<div style="position:absolute;left:550px;top:648px;width:898px;height:177px;background:#ececf0;border-top:1px solid #e0e0e4"></div>
<div style="position:absolute;left:547px;top:627px;width:54px;height:23px;background:#f4f4f6;border:1px solid #e4e4e8;border-bottom:none"></div>
<div class="t" style="left:555px;top:630px;font-size:11.8px">Indexes</div>
<div style="position:absolute;left:602px;top:629px;width:77px;height:20px;background:#e8e8ec;border:1px solid #dcdce0;border-bottom:none"></div>
<div class="t" style="left:606px;top:632px;font-size:11.8px">Relationships</div>
<svg class="ic" style="left:555px;top:655px;" width="18" height="18" viewBox="0 0 18 18"><path d="M1 4 H7 M4 1 V7" stroke="#1aa030" stroke-width="2"/><rect x="8.5" y="1.5" width="7" height="8" fill="#fff" stroke="#222" stroke-width="1.6"/><path d="M10.3 8 L12 3.5 L13.7 8 M10.8 6.5 H13.2" stroke="#222" stroke-width=".9" fill="none"/><path d="M9.5 11 H14.5 L9.5 15.5 H14.5" stroke="#111" stroke-width="1.7" fill="none"/></svg>
<div class="t" style="left:573px;top:656px;font-size:11.8px">Add Index</div>
<svg class="ic" style="left:634px;top:655px;" width="18" height="18" viewBox="0 0 18 18"><path d="M0 3 H7" stroke="#c01010" stroke-width="2"/><rect x="8.5" y="1.5" width="7" height="8" fill="#fff" stroke="#222" stroke-width="1.6"/><path d="M10.3 8 L12 3.5 L13.7 8 M10.8 6.5 H13.2" stroke="#222" stroke-width=".9" fill="none"/><path d="M9.5 11 H14.5 L9.5 15.5 H14.5" stroke="#111" stroke-width="1.7" fill="none"/></svg>
<div class="t" style="left:652px;top:656px;font-size:11.8px">Delete Index</div>
<div style="position:absolute;left:725px;top:654px;width:1px;height:20px;background:#d0d0d8"></div>
<svg class="ic" style="left:731px;top:657px;" width="15" height="15" viewBox="0 0 15 15"><path d="M0 1.5 H9 M0 4.5 H9 M0 7.5 H9" stroke="#222" stroke-width="1.8"/><path d="M0 10.5 H9" stroke="#222" stroke-width="1.8"/><path d="M12 13 V6 M9.5 8.5 L12 6 L14.5 8.5" stroke="#1a5fb4" stroke-width="1.8" fill="none"/></svg>
<div class="t" style="left:748px;top:656px;font-size:11.8px">Promote Index</div>
<svg class="ic" style="left:834px;top:657px;" width="15" height="15" viewBox="0 0 15 15"><path d="M0 1.5 H9 M0 4.5 H9 M0 7.5 H9" stroke="#222" stroke-width="1.8"/><path d="M0 10.5 H9" stroke="#222" stroke-width="1.8"/><path d="M12 5 V12 M9.5 9.5 L12 12 L14.5 9.5" stroke="#1a5fb4" stroke-width="1.8" fill="none"/></svg>
<div class="t" style="left:851px;top:656px;font-size:11.8px">Demote Index</div>
<div style="position:absolute;left:558px;top:689px;width:161px;height:140px;background:#fcfcfc;border:1px solid #9a9a9a;border-bottom:none"></div>
<div class="t" style="left:566px;top:696px;font-size:11.8px">Indexes</div>
<div style="position:absolute;left:580px;top:716px;width:137px;height:17px;background:#0a6cc8"></div>
<svg class="ic" style="left:565px;top:717px;" width="16" height="13" viewBox="0 0 16 13"><path d="M0 5 H8 V1.5 L15 6.5 L8 11.5 V8 H0Z" fill="#2a9080"/></svg>
<div class="t" style="left:582px;top:718px;font-size:11.8px;color:#fff">Index 1</div>
<div class="t" style="left:582px;top:737px;font-size:11.8px">Index 2</div>
<div style="position:absolute;left:560px;top:752px;width:157px;height:1px;background:#ededed"></div>
<div style="position:absolute;left:560px;top:771px;width:157px;height:1px;background:#ededed"></div>
<div style="position:absolute;left:560px;top:790px;width:157px;height:1px;background:#ededed"></div>
<div style="position:absolute;left:560px;top:809px;width:157px;height:1px;background:#ededed"></div>
<svg class="ic" style="left:685px;top:718px;filter:drop-shadow(1px 2px 1.5px rgba(0,0,0,.35))" width="20" height="32" viewBox="0 0 20 32"><path d="M1.5 1.5 L1.5 24 L6.8 19 L11 28.8 L14.6 27.3 L10.5 17.8 L18 17.8 Z" fill="#fff" stroke="#000" stroke-width="1.2" stroke-linejoin="round"/></svg>
<div class="t" style="left:729px;top:693px;font-size:11.8px">Index Segment:</div>
<svg class="ic" style="left:819px;top:694px;" width="15" height="15" viewBox="0 0 15 15"><path d="M0 1.5 H9 M0 4.5 H9 M0 7.5 H9" stroke="#222" stroke-width="1.8"/><path d="M0 10.5 H9" stroke="#d02020" stroke-width="1.8"/><path d="M13 7 V12 H9" stroke="#1a5fb4" stroke-width="1.4" fill="none"/><path d="M11 10 L9 12 L11 14" stroke="#1a5fb4" stroke-width="1.4" fill="none"/></svg>
<div class="t" style="left:836px;top:693px;font-size:11.8px">Add</div>
<svg class="ic" style="left:866px;top:694px;" width="15" height="15" viewBox="0 0 15 15"><path d="M0 1.5 H9 M0 4.5 H9 M0 7.5 H9" stroke="#222" stroke-width="1.8"/><path d="M0 10.5 H9" stroke="#d02020" stroke-width="1.8"/><path d="M14 6 V10 H10" stroke="#1a5fb4" stroke-width="1.4" fill="none"/><path d="M12 8 L10 10 L12 12" stroke="#1a5fb4" stroke-width="1.4" fill="none"/></svg>
<div class="t" style="left:883px;top:693px;font-size:11.8px">Insert</div>
<svg class="ic" style="left:920px;top:694px;" width="15" height="15" viewBox="0 0 15 15"><path d="M0 1.5 H9 M0 4.5 H9 M0 7.5 H9" stroke="#222" stroke-width="1.8"/><path d="M0 10.5 H9" stroke="#222" stroke-width="1.8"/><path d="M10 6 L14 12 M14 6 L10 12" stroke="#d02020" stroke-width="1.4"/></svg>
<div class="t" style="left:937px;top:693px;font-size:11.8px">Delete</div>
<div style="position:absolute;left:977px;top:690px;width:1px;height:20px;background:#d0d0d8"></div>
<svg class="ic" style="left:984px;top:694px;" width="15" height="15" viewBox="0 0 15 15"><path d="M0 1.5 H9 M0 4.5 H9 M0 7.5 H9" stroke="#222" stroke-width="1.8"/><path d="M0 10.5 H9" stroke="#222" stroke-width="1.8"/><path d="M12 13 V6 M9.5 8.5 L12 6 L14.5 8.5" stroke="#1a5fb4" stroke-width="1.8" fill="none"/></svg>
<div class="t" style="left:1001px;top:693px;font-size:11.8px">Promote</div>
<svg class="ic" style="left:1055px;top:694px;" width="15" height="15" viewBox="0 0 15 15"><path d="M0 1.5 H9 M0 4.5 H9 M0 7.5 H9" stroke="#222" stroke-width="1.8"/><path d="M0 10.5 H9" stroke="#222" stroke-width="1.8"/><path d="M12 5 V12 M9.5 9.5 L12 12 L14.5 9.5" stroke="#1a5fb4" stroke-width="1.8" fill="none"/></svg>
<div class="t" style="left:1072px;top:693px;font-size:11.8px">Demote</div>
<div style="position:absolute;left:725px;top:719px;width:250px;height:110px;background:#fcfcfc;border:1px solid #9a9a9a;border-bottom:none"></div>
<div class="t" style="left:731px;top:725px;font-size:11.8px">Column</div>
<div class="t" style="left:900px;top:725px;font-size:11.8px">Descending</div>
<div style="position:absolute;left:897px;top:722px;width:1px;height:24px;background:#ececec"></div>
<div style="position:absolute;left:727px;top:744px;width:246px;height:20px;background:#b8c4d6"></div>
<div class="t" style="left:729px;top:746px;font-size:11.8px">Id</div>
<div style="position:absolute;left:929px;top:747px;width:13px;height:13px;background:#fff;border:1px solid #333"></div>
<div style="position:absolute;left:727px;top:783px;width:246px;height:1px;border-top:1px dotted #aaa"></div>
<div style="position:absolute;left:727px;top:802px;width:246px;height:1px;border-top:1px dotted #aaa"></div>
<div style="position:absolute;left:727px;top:821px;width:246px;height:1px;border-top:1px dotted #aaa"></div>
<div style="position:absolute;left:897px;top:764px;width:1px;height:62px;border-left:1px dotted #aaa"></div>
<div style="position:absolute;left:972px;top:744px;width:1px;height:82px;border-left:1px dotted #aaa"></div>
<div class="t" style="left:983px;top:724px;font-size:11.8px">Index Name:</div>
<div style="position:absolute;left:1057px;top:719px;width:378px;height:24px;background:#fff;border:1px solid #a0a0a0"></div>
<div class="t" style="left:1060px;top:724px;font-size:11.8px">UserFeedback001</div>
<div class="t" style="left:990px;top:752px;font-size:11.8px">Index Type:</div>
<div style="position:absolute;left:1057px;top:747px;width:133px;height:24px;background:#dcdcdc;border:1px solid #b0b0b0"></div>
<div class="t" style="left:1061px;top:752px;font-size:11.8px">Server</div>
<svg class="ic" style="left:1175px;top:756px;" width="10" height="6" viewBox="0 0 10 6"><path d="M1 1 L5 5 L9 1" stroke="#333" stroke-width="1.3" fill="none"/></svg>
<div class="t" style="left:986px;top:782px;font-size:11.8px">Unique Index</div>
<div style="position:absolute;left:540px;top:825px;width:935px;height:6px;background:#f6f6f8"></div>
<div style="position:absolute;left:540px;top:831px;width:935px;height:19px;background:#b9c5d7;border-top:1px solid #a6aab8"></div>
<div class="t" style="left:544px;top:834px;font-size:11.8px;color:#1a1a1a">Output</div>
<svg class="ic" style="left:1447px;top:836px;" width="8" height="11" viewBox="0 0 8 11"><path d="M2 0 H6 V6 H7 V7 H1 V6 H2Z" fill="#111"/><path d="M3 1 V6" stroke="#888" stroke-width=".8"/><rect x="3.5" y="7" width="1" height="4" fill="#111"/></svg>
<svg class="ic" style="left:1463px;top:837px;" width="8" height="8" viewBox="0 0 8 8"><path d="M.5 .5 L7.5 7.5 M7.5 .5 L.5 7.5" stroke="#111" stroke-width="1.4"/></svg>
<svg class="ic" style="left:545px;top:855px;" width="16" height="16" viewBox="0 0 16 16"><circle cx="10" cy="9" r="3.2" fill="#fff" stroke="#222" stroke-width="1.3"/><path d="M7.5 11.5 L4 15" stroke="#222" stroke-width="1.6"/><path d="M2 3 H7" stroke="#1a4fa0" stroke-width="1.6"/><path d="M3.5 .5 L.5 3 L3.5 5.5Z" fill="#1a4fa0"/></svg>
<svg class="ic" style="left:567px;top:855px;" width="16" height="16" viewBox="0 0 16 16"><circle cx="10" cy="9" r="3.2" fill="#fff" stroke="#222" stroke-width="1.3"/><path d="M7.5 11.5 L4 15" stroke="#222" stroke-width="1.6"/><path d="M1 3 H6" stroke="#1a4fa0" stroke-width="1.6"/><path d="M5 .5 L8 3 L5 5.5Z" fill="#1a4fa0"/></svg>
<div style="position:absolute;left:587px;top:854px;width:1px;height:20px;background:#d0d0d8"></div>
<svg class="ic" style="left:595px;top:855px;" width="14" height="15" viewBox="0 0 14 15"><path d="M.7 5.7 H6 L8 7.7 V13.3 H.7Z M4 5 V1.7 H10 L12.3 4 V10.3 H8" fill="none" stroke="#222" stroke-width="1.3"/></svg>
<svg class="ic" style="left:616px;top:855px;" width="15" height="15" viewBox="0 0 15 15"><path d="M1.5 1.5 L13.5 13.5 M13.5 1.5 L1.5 13.5" stroke="#d01818" stroke-width="2.2"/></svg>
<div style="position:absolute;left:638px;top:854px;width:1px;height:20px;background:#d0d0d8"></div>
<svg class="ic" style="left:644px;top:855px;" width="15" height="15" viewBox="0 0 15 15"><rect x=".5" y=".5" width="9" height="9" fill="none" stroke="#777"/><rect x="2.5" y="2.5" width="9" height="9" fill="#fff" stroke="#555"/><rect x="4.5" y="4.5" width="9" height="9" fill="#fff" stroke="#333"/><path d="M9 6.5 V11.5 M6.5 9 H11.5" stroke="#1a5fb4" stroke-width="1.2"/></svg>
<svg class="ic" style="left:666px;top:855px;" width="15" height="15" viewBox="0 0 15 15"><rect x=".5" y=".5" width="9" height="9" fill="none" stroke="#777"/><rect x="2.5" y="2.5" width="9" height="9" fill="#fff" stroke="#555"/><rect x="4.5" y="4.5" width="9" height="9" fill="#fff" stroke="#333"/><path d="M6.5 9 H11.5" stroke="#1a5fb4" stroke-width="1.2"/></svg>
<div style="position:absolute;left:539px;top:876px;width:936px;height:116px;background:#fff;border:1px solid #a0a0a0"></div>
<div style="position:absolute;left:1456px;top:878px;width:17px;height:112px;background:#efefef"></div>
<div style="position:absolute;left:1457px;top:955px;width:15px;height:17px;background:#c8c8c8"></div>
<svg class="ic" style="left:1459px;top:882px;" width="11" height="7" viewBox="0 0 11 7"><path d="M1 6 L5.5 1.5 L10 6" stroke="#333" stroke-width="1.5" fill="none"/></svg>
<svg class="ic" style="left:1459px;top:976px;" width="11" height="7" viewBox="0 0 11 7"><path d="M1 1 L5.5 5.5 L10 1" stroke="#333" stroke-width="1.5" fill="none"/></svg>
<div style="position:absolute;left:553px;top:877px;width:1px;height:101px;border-left:1px dotted #888"></div>
<div style="position:absolute;left:567px;top:877px;width:1px;height:10px;border-left:1px dotted #888"></div>
<div style="position:absolute;left:567px;top:887px;width:8px;height:1px;border-top:1px dotted #888"></div>
<div style="position:absolute;left:553px;top:905px;width:9px;height:1px;border-top:1px dotted #888"></div>
<div style="position:absolute;left:553px;top:923px;width:9px;height:1px;border-top:1px dotted #888"></div>
<div style="position:absolute;left:553px;top:941px;width:9px;height:1px;border-top:1px dotted #888"></div>
<div style="position:absolute;left:553px;top:977px;width:9px;height:1px;border-top:1px dotted #888"></div>
<svg class="ic" style="left:579px;top:880px;" width="9" height="14" viewBox="0 0 9 14"><path d="M.7 .7 L8 7 L.7 13.3Z" fill="none" stroke="#444" stroke-width="1.2"/></svg>
<div class="t" style="left:597px;top:880px;font-size:11.8px">Total Blocks&nbsp;&nbsp;&nbsp;: 14932</div>
<svg class="ic" style="left:561px;top:898px;" width="14" height="14" viewBox="0 0 14 14"><circle cx="7" cy="7" r="6.9" fill="#222"/><rect x="4" y="4" width="6" height="6" fill="#fff" rx="1"/></svg>
<div class="t" style="left:581px;top:898px;font-size:11.8px"><span style="letter-spacing:1.3px">----</span>Compile Finished<span style="letter-spacing:1.3px">----</span></div>
<svg class="ic" style="left:561px;top:916px;" width="14" height="14" viewBox="0 0 14 14"><circle cx="7" cy="7" r="6.9" fill="#222"/><rect x="4" y="4" width="6" height="6" fill="#fff" rx="1"/></svg>
<div class="t" style="left:581px;top:916px;font-size:11.8px"><span style="letter-spacing:1.3px">----</span>Executable written: C:\dev\repo\Editor-Sample\Programs\WebApp.exe</div>
<svg class="ic" style="left:561px;top:934px;" width="14" height="14" viewBox="0 0 14 14"><circle cx="7" cy="7" r="7" fill="#1a7ad0"/><rect x="6" y="6" width="2.2" height="6" fill="#fff"/><circle cx="7.1" cy="3.8" r="1.3" fill="#fff"/></svg>
<div class="t" style="left:581px;top:934px;font-size:11.8px">Starting web application: Editor Sample</div>
<div style="position:absolute;left:548px;top:954px;width:9px;height:9px;background:#fff;border:1px solid #aaa"></div>
<svg class="ic" style="left:548px;top:954px;" width="9" height="9" viewBox="0 0 9 9"><path d="M2 4.5 H7 M4.5 2 V7" stroke="#4a60b0"/></svg>
<svg class="ic" style="left:561px;top:952px;" width="14" height="14" viewBox="0 0 14 14"><circle cx="7" cy="7" r="7" fill="#22a02a"/><path d="M5 3.5 L10.5 7 L5 10.5Z" fill="#fff"/></svg>
<div class="t" style="left:581px;top:952px;font-size:11.8px"><span style="letter-spacing:1.3px">----</span>Loading Program In Debugger<span style="letter-spacing:1.3px">----</span></div>
<div style="position:absolute;left:579px;top:968px;width:197px;height:18px;background:#ececec"></div>
<svg class="ic" style="left:561px;top:970px;" width="14" height="14" viewBox="0 0 14 14"><circle cx="7" cy="7" r="6.9" fill="#222"/><rect x="4" y="4" width="6" height="6" fill="#fff" rx="1"/></svg>
<div class="t" style="left:581px;top:970px;font-size:11.8px"><span style="letter-spacing:1.3px">----</span>Exiting Program In Debugger<span style="letter-spacing:1.3px">----</span></div>
<div style="position:absolute;left:541px;top:994px;width:206px;height:21px;background:#e6e6ea;border:1px solid #dcdce0;border-top:none"></div>
<svg class="ic" style="left:546px;top:997px;" width="16" height="15" viewBox="0 0 16 15"><rect x=".6" y="1.6" width="14.8" height="12.8" fill="#fff" stroke="#444" stroke-width="1.2"/><rect x="0" y="1" width="16" height="1.8" fill="#111"/><path d="M2 13 L5 7 L8 13Z" fill="#f0d020"/><path d="M9 9 L11 12 L14 5" stroke="#111" stroke-width="1.4" fill="none"/></svg>
<div class="t" style="left:566px;top:997px;font-size:11.8px">Problem Resolution [WebApp.src]</div>
<div style="position:absolute;left:747px;top:994px;width:69px;height:22px;background:#fff"></div>
<svg class="ic" style="left:752px;top:997px;" width="15" height="15" viewBox="0 0 15 15"><path d="M6 .7 H.7 V14.3 H6" fill="none" stroke="#444" stroke-width="1.3"/><path d="M3 7.5 H11" stroke="#111" stroke-width="1.8"/><path d="M8.5 3.5 L13 7.5 L8.5 11.5" stroke="#111" stroke-width="1.8" fill="none"/></svg>
<div class="t" style="left:770px;top:997px;font-size:11.8px">Output</div>
<div style="position:absolute;left:817px;top:994px;width:151px;height:21px;background:#e6e6ea;border:1px solid #dcdce0;border-top:none"></div>
<svg class="ic" style="left:822px;top:997px;" width="13" height="15" viewBox="0 0 13 15"><path d="M.7 3.7 H3 M8 3.7 H10.3 V14.3 H.7 V3.7" fill="none" stroke="#444" stroke-width="1.2"/><path d="M3 4 L5.5 1 L8 4" fill="none" stroke="#444" stroke-width="1.2"/><path d="M3 9 L5 12 L9 6" stroke="#111" stroke-width="1.5" fill="none"/></svg>
<div class="t" style="left:838px;top:997px;font-size:11.8px">To Do List [WebApp.src]</div>
<div style="position:absolute;left:1479px;top:133px;width:188px;height:19px;background:#b9c5d7;border-top:1px solid #a6aab8"></div>
<div class="t" style="left:1483px;top:136px;font-size:11.8px;color:#1a1a1a">DDO Explorer (Inactive)</div>
<svg class="ic" style="left:1639px;top:138px;" width="8" height="11" viewBox="0 0 8 11"><path d="M2 0 H6 V6 H7 V7 H1 V6 H2Z" fill="#111"/><path d="M3 1 V6" stroke="#888" stroke-width=".8"/><rect x="3.5" y="7" width="1" height="4" fill="#111"/></svg>
<svg class="ic" style="left:1655px;top:139px;" width="8" height="8" viewBox="0 0 8 8"><path d="M.5 .5 L7.5 7.5 M7.5 .5 L.5 7.5" stroke="#111" stroke-width="1.4"/></svg>
<svg class="ic" style="left:1485px;top:158px;" width="16" height="16" viewBox="0 0 16 16"><path d="M6 4 H10 V14 H6Z M10 4 H15 V14 H10" fill="none" stroke="#666" stroke-width="1.1"/><path d="M3 1 V7 M0 4 H6" stroke="#666" stroke-width="1.3"/><path d="M1 6 V14 H6" fill="none" stroke="#666"/></svg>
<svg class="ic" style="left:1507px;top:158px;" width="16" height="16" viewBox="0 0 16 16"><ellipse cx="4" cy="10" rx="3.5" ry="1.5" fill="#666"/><rect x=".5" y="10" width="7" height="5" fill="#666"/><path d="M9 1 H15 V5 H9Z M12 1 V5" fill="none" stroke="#666"/><path d="M2 6 V3 H6" fill="none" stroke="#666"/><path d="M13 9 V13 H10" fill="none" stroke="#666"/></svg>
<svg class="ic" style="left:1529px;top:158px;" width="16" height="16" viewBox="0 0 16 16"><path d="M5 2 H10 V11 H5Z M10 2 H15 V11 H10" fill="none" stroke="#666" stroke-width="1.1"/><circle cx="4" cy="12" r="3.5" fill="#666"/><text x="4" y="14" font-size="5" text-anchor="middle" fill="#fff" font-family="Liberation Sans">m</text></svg>
<div style="position:absolute;left:1549px;top:157px;width:1px;height:22px;background:#d0d0d8"></div>
<svg class="ic" style="left:1556px;top:158px;" width="16" height="16" viewBox="0 0 16 16"><path d="M1 3 H7 V14 H1Z M7 3 H14 V14 H7" fill="none" stroke="#666" stroke-width="1.2"/><path d="M1 3 L4 1 H14" fill="none" stroke="#666"/></svg>
<svg class="ic" style="left:1578px;top:158px;" width="16" height="16" viewBox="0 0 16 16"><path d="M0 0 L4 4 M4 0 L0 4" stroke="#666"/><rect x="6.5" y="2.5" width="5" height="4" fill="none" stroke="#666"/><path d="M9 6.5 V9 M3 9 H14 M3 9 V11 M14 9 V11" stroke="#666" fill="none"/><rect x="0.5" y="11.5" width="5" height="4" fill="none" stroke="#666"/><rect x="9.5" y="11.5" width="5" height="4" fill="none" stroke="#666"/></svg>
<div style="position:absolute;left:1599px;top:157px;width:1px;height:22px;background:#d0d0d8"></div>
<svg class="ic" style="left:1606px;top:158px;" width="16" height="16" viewBox="0 0 16 16"><path d="M2 1 V6 M0 3.5 H4" stroke="#666" stroke-width="1.3"/><rect x="7.5" y="1.5" width="7" height="5" fill="none" stroke="#666"/><path d="M11 6.5 V9" stroke="#666"/><rect x="1.5" y="9.5" width="8" height="5" fill="none" stroke="#666"/><path d="M1.5 12 H9.5" stroke="#666"/></svg>
<svg class="ic" style="left:1628px;top:158px;" width="16" height="16" viewBox="0 0 16 16"><path d="M0 3.5 H4" stroke="#666" stroke-width="1.3"/><rect x="7.5" y="1.5" width="7" height="5" fill="none" stroke="#666"/><path d="M11 6.5 V9" stroke="#666"/><rect x="1.5" y="9.5" width="8" height="5" fill="none" stroke="#666"/><path d="M1.5 12 H9.5" stroke="#666"/></svg>
<div style="position:absolute;left:1479px;top:183px;width:185px;height:809px;background:#fff;border:1px solid #a0a0a0"></div>
<div style="position:absolute;left:1480px;top:994px;width:101px;height:22px;background:#fff"></div>
<svg class="ic" style="left:1485px;top:998px;" width="15" height="15" viewBox="0 0 15 15"><ellipse cx="11" cy="2.5" rx="3.5" ry="1.5" fill="#333"/><rect x="7.5" y="2.5" width="7" height="6" fill="#333"/><circle cx="4" cy="8" r="1.5" fill="#111"/><path d="M4 9 V11 M1 14 L4 11 L7 14" stroke="#111" stroke-width="1.3" fill="none"/><rect x="0" y="13" width="2.5" height="2" fill="#111"/><rect x="6" y="13" width="2.5" height="2" fill="#111"/></svg>
<div class="t" style="left:1503px;top:997px;font-size:11.8px">DDO Explor...</div>
<div style="position:absolute;left:1581px;top:994px;width:80px;height:21px;background:#e6e6ea;border:1px solid #dcdce0;border-top:none"></div>
<svg class="ic" style="left:1586px;top:997px;" width="16" height="16" viewBox="0 0 16 16"><rect x="4.7" y=".7" width="10.6" height="13" fill="none" stroke="#444" stroke-width="1.2"/><path d="M8 1 V14 M11.5 1 V14 M5 4 H15 M5 7 H15 M5 10 H15" stroke="#777" stroke-width=".8"/><path d="M1 8 L3 14 L5 8" stroke="#111" stroke-width="1.5" fill="none"/></svg>
<div class="t" style="left:1604px;top:997px;font-size:11.8px">Properties</div>
<div style="position:absolute;left:0px;top:1040px;width:1920px;height:40px;background:#c8e0ec"></div>
<svg class="ic" style="left:16px;top:1052px;" width="18" height="17" viewBox="0 0 18 17"><path d="M0 2 L7 1 L7 8 L0 8Z M8 1 L17 0 L17 8 L8 8Z M0 9 L7 9 L7 16 L0 15Z M8 9 L17 9 L17 17 L8 16Z" fill="#000"/></svg>
</body></html>
